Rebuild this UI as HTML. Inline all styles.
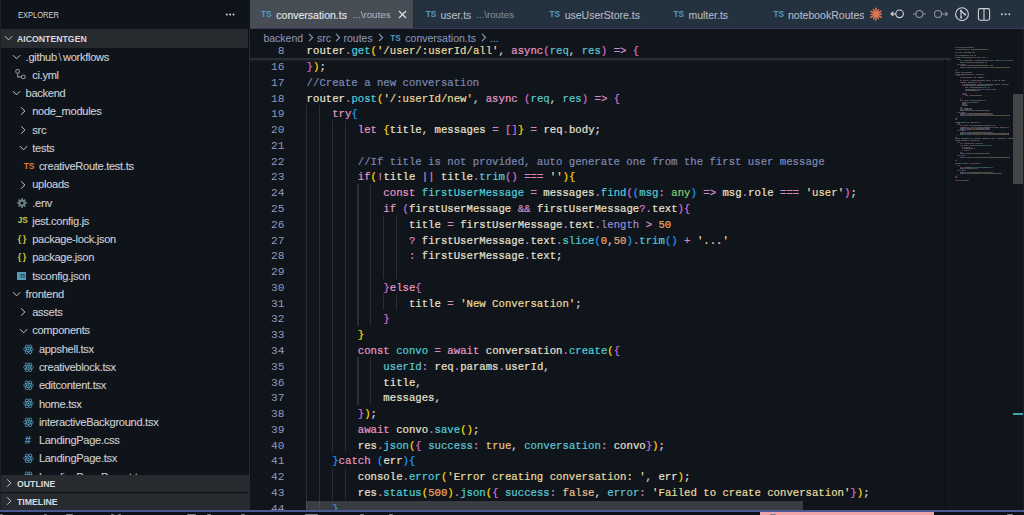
<!DOCTYPE html><html><head><meta charset="utf-8"><style>
*{margin:0;padding:0;box-sizing:border-box}
html,body{width:1024px;height:515px;overflow:hidden;background:#10141b}
body{position:relative;font-family:"Liberation Sans",sans-serif}
.a{position:absolute}
#sb{position:absolute;left:0;top:0;width:249px;height:510px;background:#0f131a;overflow:hidden}
.row{position:absolute;left:0;width:249px;height:18.26px;color:#cccfd6;font-size:11.1px;letter-spacing:-0.3px;line-height:19.6px;white-space:pre;-webkit-text-stroke:0.12px}
.row .t{position:absolute;top:0}
.chev{position:absolute;width:5px;height:5px;border-right:1.1px solid #c5c8ce;border-bottom:1.1px solid #c5c8ce}
.cl{position:absolute;left:306.6px;height:15.77px;line-height:15.77px;font-family:"Liberation Mono",monospace;font-size:10.67px;white-space:pre;color:#e6e1cf;-webkit-text-stroke:0.2px;transform:scaleY(1.04);transform-origin:0 10.4px}
.ln{position:absolute;left:250px;width:34.5px;text-align:right;height:15.77px;line-height:15.77px;font-family:"Liberation Mono",monospace;font-size:11.2px;color:#9199bd;transform:scaleY(1.05);transform-origin:0 10.4px}
.v{color:#e6e1cf}.p{color:#d77cc0}.f{color:#4fcfd9}.s{color:#e8dc9f}.k{color:#e698c6}.o{color:#d58ac6}
.c{color:#7d88b5}.n{color:#e7a76a}.b{color:#e9c08a}.ty{color:#80d27a}.pr{color:#5ec8d6}.pa{color:#5bc9cf}
.len{color:#8f8bdb}.g1{color:#ffd700}.g2{color:#da70d6}.g3{color:#179fff}.w{color:#d9d9d9}.cn{color:#4fcfd9}
.gd{position:absolute;width:1.2px;background:#2a2e35}
.mm{position:absolute;height:1.2px;opacity:0.3}
.tab{position:absolute;top:0;height:28px;font-size:10.5px;line-height:30px;-webkit-text-stroke:0.1px;white-space:pre;color:#aab0ba}
.ts{font-family:"Liberation Sans",sans-serif;font-weight:bold;font-size:8px;color:#519aba}
</style></head><body>
<div id="sb"><div class="a" style="left:0;top:0;width:1px;height:510px;background:#1c2027"></div><div class="a" style="left:17.6px;top:0;height:29px;line-height:30.6px;font-size:9.6px;color:#d0d3d8;transform:scaleX(0.785);transform-origin:0 0">EXPLORER</div><svg class="a" style="left:224px;top:12px" width="12" height="5" viewBox="0 0 12 5"><g fill="#d0d3d8"><circle cx="2.8" cy="2.4" r="1"/><circle cx="6.2" cy="2.4" r="1"/><circle cx="9.5" cy="2.4" r="1"/></g></svg><div class="a" style="left:1px;top:29.3px;width:248px;height:18.26px;background:#272a2e"></div><svg class="a" style="left:3.90px;top:34.43px" width="10" height="8" viewBox="0 0 10 8"><path d="M1 2.2L4.6 5.8L8.2 2.2" fill="none" stroke="#c3c7cd" stroke-width="1"/></svg><div class="a" style="left:17.4px;top:29.3px;height:18.26px;line-height:18.26px;font-size:9.7px;font-weight:bold;color:#d8dbe0;transform:scaleX(0.9);transform-origin:0 0;line-height:19.3px">AICONTENTGEN</div><svg class="a" style="left:12.20px;top:52.69px" width="10" height="8" viewBox="0 0 10 8"><path d="M1 2.2L4.6 5.8L8.2 2.2" fill="none" stroke="#c3c7cd" stroke-width="1"/></svg><div class="row" style="top:47.56px"><span class="t" style="left:25.6px">.github<span style="color:#9aa0a8;margin:0 1.8px 0 1.6px">\</span>workflows</span></div><svg class="a" style="left:15.24px;top:69.35px" width="11" height="11" viewBox="0 0 11 11"><g fill="none" stroke="#8a8f98" stroke-width="1.1"><circle cx="2.6" cy="2.4" r="1.9"/><circle cx="8.3" cy="7.9" r="1.9"/><path d="M2.6 4.3V7.9H6.4"/></g></svg><div class="row" style="top:65.82px"><span class="t" style="left:32.24px">ci.yml</span></div><svg class="a" style="left:12.20px;top:89.21px" width="10" height="8" viewBox="0 0 10 8"><path d="M1 2.2L4.6 5.8L8.2 2.2" fill="none" stroke="#c3c7cd" stroke-width="1"/></svg><div class="row" style="top:84.08px"><span class="t" style="left:25.60px">backend</span></div><svg class="a" style="left:19.64px;top:106.47px" width="7" height="10" viewBox="0 0 7 10"><path d="M1.2 1.3L4.8 5L1.2 8.7" fill="none" stroke="#c3c7cd" stroke-width="1"/></svg><div class="row" style="top:102.34px"><span class="t" style="left:32.24px">node_modules</span></div><svg class="a" style="left:19.64px;top:124.73px" width="7" height="10" viewBox="0 0 7 10"><path d="M1.2 1.3L4.8 5L1.2 8.7" fill="none" stroke="#c3c7cd" stroke-width="1"/></svg><div class="row" style="top:120.60px"><span class="t" style="left:32.24px">src</span></div><svg class="a" style="left:18.84px;top:143.99px" width="10" height="8" viewBox="0 0 10 8"><path d="M1 2.2L4.6 5.8L8.2 2.2" fill="none" stroke="#c3c7cd" stroke-width="1"/></svg><div class="row" style="top:138.86px"><span class="t" style="left:32.24px">tests</span></div><div class="a" style="left:23.68px;top:157.12px;line-height:18.26px;font-size:8.4px;font-weight:bold;color:#e37933">TS</div><div class="row" style="top:157.12px"><span class="t" style="left:38.88px">creativeRoute.test.ts</span></div><svg class="a" style="left:19.64px;top:179.51px" width="7" height="10" viewBox="0 0 7 10"><path d="M1.2 1.3L4.8 5L1.2 8.7" fill="none" stroke="#c3c7cd" stroke-width="1"/></svg><div class="row" style="top:175.38px"><span class="t" style="left:32.24px">uploads</span></div><svg class="a" style="left:16.74px;top:197.77px" width="10" height="10" viewBox="0 0 10 10"><g fill="#6d8086"><circle cx="5" cy="5" r="3.4"/><rect x="4.1" y="0.2" width="1.8" height="2.2" transform="rotate(0 5 5)"/><rect x="4.1" y="0.2" width="1.8" height="2.2" transform="rotate(45 5 5)"/><rect x="4.1" y="0.2" width="1.8" height="2.2" transform="rotate(90 5 5)"/><rect x="4.1" y="0.2" width="1.8" height="2.2" transform="rotate(135 5 5)"/><rect x="4.1" y="0.2" width="1.8" height="2.2" transform="rotate(180 5 5)"/><rect x="4.1" y="0.2" width="1.8" height="2.2" transform="rotate(225 5 5)"/><rect x="4.1" y="0.2" width="1.8" height="2.2" transform="rotate(270 5 5)"/><rect x="4.1" y="0.2" width="1.8" height="2.2" transform="rotate(315 5 5)"/></g><circle cx="5" cy="5" r="1.5" fill="#0f131a"/></svg><div class="row" style="top:193.64px"><span class="t" style="left:32.24px">.env</span></div><div class="a" style="left:17.74px;top:211.90000000000003px;line-height:18.26px;font-size:8.2px;font-weight:bold;color:#cbcb41">JS</div><div class="row" style="top:211.90px"><span class="t" style="left:32.24px">jest.config.js</span></div><div class="a" style="left:17.64px;top:230.16000000000003px;line-height:18.66px;font-size:9px;font-weight:bold;color:#cbcb41;letter-spacing:1.6px">{}</div><div class="row" style="top:230.16px"><span class="t" style="left:32.24px">package-lock.json</span></div><div class="a" style="left:17.64px;top:248.42000000000002px;line-height:18.66px;font-size:9px;font-weight:bold;color:#cbcb41;letter-spacing:1.6px">{}</div><div class="row" style="top:248.42px"><span class="t" style="left:32.24px">package.json</span></div><div class="a" style="left:16.94px;top:271.51px;width:9.4px;height:8.6px;background:#519aba"></div><div class="a" style="left:19.64px;top:275.31px;font-size:4.5px;line-height:4px;color:#1b3c4c;font-weight:bold">TS</div><div class="row" style="top:266.68px"><span class="t" style="left:32.24px">tsconfig.json</span></div><svg class="a" style="left:12.20px;top:290.07px" width="10" height="8" viewBox="0 0 10 8"><path d="M1 2.2L4.6 5.8L8.2 2.2" fill="none" stroke="#c3c7cd" stroke-width="1"/></svg><div class="row" style="top:284.94px"><span class="t" style="left:25.60px">frontend</span></div><svg class="a" style="left:19.64px;top:307.33px" width="7" height="10" viewBox="0 0 7 10"><path d="M1.2 1.3L4.8 5L1.2 8.7" fill="none" stroke="#c3c7cd" stroke-width="1"/></svg><div class="row" style="top:303.20px"><span class="t" style="left:32.24px">assets</span></div><svg class="a" style="left:18.84px;top:326.59px" width="10" height="8" viewBox="0 0 10 8"><path d="M1 2.2L4.6 5.8L8.2 2.2" fill="none" stroke="#c3c7cd" stroke-width="1"/></svg><div class="row" style="top:321.46px"><span class="t" style="left:32.24px">components</span></div><svg class="a" style="left:22.88px;top:343.55px" width="11" height="10.6" viewBox="0 0 22 21"><g fill="none" stroke="#519aba" stroke-width="1.6"><ellipse cx="11" cy="10.5" rx="10" ry="4"/><ellipse cx="11" cy="10.5" rx="10" ry="4" transform="rotate(60 11 10.5)"/><ellipse cx="11" cy="10.5" rx="10" ry="4" transform="rotate(120 11 10.5)"/></g><circle cx="11" cy="10.5" r="2" fill="#519aba"/></svg><div class="row" style="top:339.72px"><span class="t" style="left:38.88px">appshell.tsx</span></div><svg class="a" style="left:22.88px;top:361.81px" width="11" height="10.6" viewBox="0 0 22 21"><g fill="none" stroke="#519aba" stroke-width="1.6"><ellipse cx="11" cy="10.5" rx="10" ry="4"/><ellipse cx="11" cy="10.5" rx="10" ry="4" transform="rotate(60 11 10.5)"/><ellipse cx="11" cy="10.5" rx="10" ry="4" transform="rotate(120 11 10.5)"/></g><circle cx="11" cy="10.5" r="2" fill="#519aba"/></svg><div class="row" style="top:357.98px"><span class="t" style="left:38.88px">creativeblock.tsx</span></div><svg class="a" style="left:22.88px;top:380.07px" width="11" height="10.6" viewBox="0 0 22 21"><g fill="none" stroke="#519aba" stroke-width="1.6"><ellipse cx="11" cy="10.5" rx="10" ry="4"/><ellipse cx="11" cy="10.5" rx="10" ry="4" transform="rotate(60 11 10.5)"/><ellipse cx="11" cy="10.5" rx="10" ry="4" transform="rotate(120 11 10.5)"/></g><circle cx="11" cy="10.5" r="2" fill="#519aba"/></svg><div class="row" style="top:376.24px"><span class="t" style="left:38.88px">editcontent.tsx</span></div><svg class="a" style="left:22.88px;top:398.33px" width="11" height="10.6" viewBox="0 0 22 21"><g fill="none" stroke="#519aba" stroke-width="1.6"><ellipse cx="11" cy="10.5" rx="10" ry="4"/><ellipse cx="11" cy="10.5" rx="10" ry="4" transform="rotate(60 11 10.5)"/><ellipse cx="11" cy="10.5" rx="10" ry="4" transform="rotate(120 11 10.5)"/></g><circle cx="11" cy="10.5" r="2" fill="#519aba"/></svg><div class="row" style="top:394.50px"><span class="t" style="left:38.88px">home.tsx</span></div><svg class="a" style="left:22.88px;top:416.59px" width="11" height="10.6" viewBox="0 0 22 21"><g fill="none" stroke="#519aba" stroke-width="1.6"><ellipse cx="11" cy="10.5" rx="10" ry="4"/><ellipse cx="11" cy="10.5" rx="10" ry="4" transform="rotate(60 11 10.5)"/><ellipse cx="11" cy="10.5" rx="10" ry="4" transform="rotate(120 11 10.5)"/></g><circle cx="11" cy="10.5" r="2" fill="#519aba"/></svg><div class="row" style="top:412.76px"><span class="t" style="left:38.88px">interactiveBackground.tsx</span></div><div class="a" style="left:24.68px;top:431.02000000000004px;line-height:18.26px;font-size:11px;font-weight:bold;color:#519aba">#</div><div class="row" style="top:431.02px"><span class="t" style="left:38.88px">LandingPage.css</span></div><svg class="a" style="left:22.88px;top:453.11px" width="11" height="10.6" viewBox="0 0 22 21"><g fill="none" stroke="#519aba" stroke-width="1.6"><ellipse cx="11" cy="10.5" rx="10" ry="4"/><ellipse cx="11" cy="10.5" rx="10" ry="4" transform="rotate(60 11 10.5)"/><ellipse cx="11" cy="10.5" rx="10" ry="4" transform="rotate(120 11 10.5)"/></g><circle cx="11" cy="10.5" r="2" fill="#519aba"/></svg><div class="row" style="top:449.28px"><span class="t" style="left:38.88px">LandingPage.tsx</span></div><svg class="a" style="left:22.88px;top:471.37px" width="11" height="10.6" viewBox="0 0 22 21"><g fill="none" stroke="#519aba" stroke-width="1.6"><ellipse cx="11" cy="10.5" rx="10" ry="4"/><ellipse cx="11" cy="10.5" rx="10" ry="4" transform="rotate(60 11 10.5)"/><ellipse cx="11" cy="10.5" rx="10" ry="4" transform="rotate(120 11 10.5)"/></g><circle cx="11" cy="10.5" r="2" fill="#519aba"/></svg><div class="row" style="top:467.54px"><span class="t" style="left:38.88px">LandingPageParent.tsx</span></div><div class="a" style="left:1px;top:474.9px;width:248px;height:17.6px;background:#272a2e"></div><div class="a" style="left:1px;top:492.5px;width:248px;height:17.5px;background:#272a2e;border-top:1px solid #1d2024"></div><svg class="a" style="left:6.20px;top:478.10px" width="7" height="10" viewBox="0 0 7 10"><path d="M1.2 1.3L4.8 5L1.2 8.7" fill="none" stroke="#c3c7cd" stroke-width="1"/></svg><svg class="a" style="left:6.20px;top:495.60px" width="7" height="10" viewBox="0 0 7 10"><path d="M1.2 1.3L4.8 5L1.2 8.7" fill="none" stroke="#c3c7cd" stroke-width="1"/></svg><div class="a" style="left:17.3px;top:474.9px;line-height:17.6px;font-size:9.7px;font-weight:bold;color:#d8dbe0;transform:scaleX(0.9);transform-origin:0 0;line-height:18.6px">OUTLINE</div><div class="a" style="left:17.3px;top:492.5px;line-height:17.5px;font-size:9.7px;font-weight:bold;color:#d8dbe0;transform:scaleX(0.9);transform-origin:0 0;line-height:18.5px">TIMELINE</div></div><div class="a" style="left:248px;top:29px;width:3px;height:446px;background:#0c1015"></div><div class="a" style="left:249px;top:29px;width:1px;height:481px;background:#272b34"></div><div class="a" style="left:250px;top:0;width:774px;height:28px;background:#24313e"></div><div class="a" style="left:249.5px;top:0;width:163.5px;height:28px;background:#474d55"></div><div class="a" style="left:250px;top:27.8px;width:774px;height:1.4px;background:#3f3655"></div><div class="a" style="left:413px;top:0;width:1.2px;height:27.8px;background:#1f2a35"></div><div class="tab ts" style="left:261px;line-height:29.6px;font-size:8.2px">TS</div><div class="tab" style="left:276.3px;color:#e8eaee">conversation.ts</div><div class="tab" style="left:352.5px;font-size:9.8px;color:#a7adb6">...\routes</div><svg class="a" style="left:397.5px;top:9.5px" width="9" height="9" viewBox="0 0 9 9"><path d="M1 1L8 8M8 1L1 8" stroke="#e0e2e6" stroke-width="1.2"/></svg><div class="tab ts" style="left:425.8px;line-height:29.6px;font-size:8.2px">TS</div><div class="tab" style="left:440.4px;color:#b4bac4">user.ts</div><div class="tab" style="left:476px;font-size:9.8px;color:#7f8794">...\routes</div><div class="tab ts" style="left:549.4px;line-height:29.6px;font-size:8.2px">TS</div><div class="tab" style="left:564.7px;color:#b4bac4">useUserStore.ts</div><div class="tab ts" style="left:673.5px;line-height:29.6px;font-size:8.2px">TS</div><div class="tab" style="left:688.4px;color:#b4bac4">multer.ts</div><div class="a" style="left:773px;top:0;width:90.5px;height:28px;overflow:hidden"><div class="tab ts" style="left:0.5px;line-height:29.6px;font-size:8.2px">TS</div><div class="tab" style="left:15px;color:#b4bac4">notebookRoutes.ts</div></div><svg class="a" style="left:860px;top:0px" width="164" height="28" viewBox="860 0 164 28">
<g transform="translate(876,14.3)" fill="#e0764f"><rect x="-0.75" y="-6.8" width="1.5" height="5.3" rx="0.7" transform="rotate(0)"/><rect x="-0.75" y="-5.8" width="1.5" height="4.3" rx="0.7" transform="rotate(30)"/><rect x="-0.75" y="-6.6" width="1.5" height="5.1" rx="0.7" transform="rotate(58)"/><rect x="-0.75" y="-6.0" width="1.5" height="4.5" rx="0.7" transform="rotate(88)"/><rect x="-0.75" y="-6.9" width="1.5" height="5.4" rx="0.7" transform="rotate(120)"/><rect x="-0.75" y="-5.6" width="1.5" height="4.1" rx="0.7" transform="rotate(150)"/><rect x="-0.75" y="-6.4" width="1.5" height="4.9" rx="0.7" transform="rotate(182)"/><rect x="-0.75" y="-6.0" width="1.5" height="4.5" rx="0.7" transform="rotate(208)"/><rect x="-0.75" y="-6.8" width="1.5" height="5.3" rx="0.7" transform="rotate(240)"/><rect x="-0.75" y="-5.7" width="1.5" height="4.2" rx="0.7" transform="rotate(268)"/><rect x="-0.75" y="-6.6" width="1.5" height="5.1" rx="0.7" transform="rotate(300)"/><rect x="-0.75" y="-6.1" width="1.5" height="4.6" rx="0.7" transform="rotate(330)"/><circle r="2.6"/></g>
<g fill="none" stroke="#cdd1d6" stroke-width="1.15"><circle cx="899.6" cy="13.8" r="3.8"/><path d="M895.8 13.8H891.2M893.3 11.6L891 13.8L893.3 16"/></g>
<g fill="none" stroke="#8e949d" stroke-width="1.05"><circle cx="919.4" cy="14" r="3.5"/><path d="M913 14H915.9M922.9 14H925.8"/></g>
<g fill="none" stroke="#8e949d" stroke-width="1.05"><circle cx="938" cy="14" r="3.5"/><path d="M941.5 14H947.4M945.3 11.8L947.5 14L945.3 16.2"/></g>
<g fill="none" stroke="#cdd1d6" stroke-width="1.1"><circle cx="962" cy="14.2" r="6.4"/><path d="M961 11V17.6M961 11L965 14.5"/></g>
<g fill="#cdd1d6"><circle cx="961" cy="10.9" r="1.05"/><circle cx="961.2" cy="17.6" r="1.05"/><circle cx="965.1" cy="14.6" r="1.05"/></g>
<g fill="none" stroke="#cdd1d6" stroke-width="1.1"><rect x="978.4" y="8.6" width="11.2" height="11.6" rx="1.6"/><path d="M984 8.6V20.2"/></g>
<g fill="#cdd1d6"><circle cx="1001.9" cy="14.3" r="0.95"/><circle cx="1005.6" cy="14.3" r="0.95"/><circle cx="1009.3" cy="14.3" r="0.95"/></g>
</svg><div class="a" style="left:263.4px;top:29px;height:17px;line-height:18.5px;font-size:10.5px;color:#8b93b6;white-space:pre;-webkit-text-stroke:0.1px">backend</div><svg class="a" style="left:307.8px;top:33.3px" width="6" height="9" viewBox="0 0 6 9"><path d="M1 0.8L4.6 4.5L1 8.2" fill="none" stroke="#8b93b6" stroke-width="1.2"/></svg><div class="a" style="left:317px;top:29px;height:17px;line-height:18.5px;font-size:10.5px;color:#8b93b6;white-space:pre;-webkit-text-stroke:0.1px">src</div><svg class="a" style="left:335px;top:33.3px" width="6" height="9" viewBox="0 0 6 9"><path d="M1 0.8L4.6 4.5L1 8.2" fill="none" stroke="#8b93b6" stroke-width="1.2"/></svg><div class="a" style="left:343.5px;top:29px;height:17px;line-height:18.5px;font-size:10.5px;color:#8b93b6;white-space:pre;-webkit-text-stroke:0.1px">routes</div><svg class="a" style="left:377.5px;top:33.3px" width="6" height="9" viewBox="0 0 6 9"><path d="M1 0.8L4.6 4.5L1 8.2" fill="none" stroke="#8b93b6" stroke-width="1.2"/></svg><div class="a ts" style="left:390.3px;top:29px;line-height:19px;font-size:8.2px">TS</div><div class="a" style="left:405.3px;top:29px;height:17px;line-height:18.5px;font-size:10.5px;color:#8b93b6;white-space:pre;-webkit-text-stroke:0.1px">conversation.ts</div><svg class="a" style="left:480.8px;top:33.3px" width="6" height="9" viewBox="0 0 6 9"><path d="M1 0.8L4.6 4.5L1 8.2" fill="none" stroke="#8b93b6" stroke-width="1.2"/></svg><div class="a" style="left:490px;top:29px;height:17px;line-height:18.5px;font-size:10.5px;color:#8b93b6;white-space:pre;-webkit-text-stroke:0.1px">...</div><div class="gd" style="left:306.20px;top:105.01px;height:16.07px"></div><div class="gd" style="left:319.00px;top:105.01px;height:16.07px"></div><div class="gd" style="left:306.20px;top:120.78px;height:16.07px"></div><div class="gd" style="left:319.00px;top:120.78px;height:16.07px"></div><div class="gd" style="left:331.81px;top:120.78px;height:16.07px"></div><div class="gd" style="left:344.61px;top:120.78px;height:16.07px"></div><div class="gd" style="left:306.20px;top:136.55px;height:16.07px"></div><div class="gd" style="left:319.00px;top:136.55px;height:16.07px"></div><div class="gd" style="left:331.81px;top:136.55px;height:16.07px"></div><div class="gd" style="left:344.61px;top:136.55px;height:16.07px"></div><div class="gd" style="left:306.20px;top:152.32px;height:16.07px"></div><div class="gd" style="left:319.00px;top:152.32px;height:16.07px"></div><div class="gd" style="left:331.81px;top:152.32px;height:16.07px"></div><div class="gd" style="left:344.61px;top:152.32px;height:16.07px"></div><div class="gd" style="left:306.20px;top:168.09px;height:16.07px"></div><div class="gd" style="left:319.00px;top:168.09px;height:16.07px"></div><div class="gd" style="left:331.81px;top:168.09px;height:16.07px"></div><div class="gd" style="left:344.61px;top:168.09px;height:16.07px"></div><div class="gd" style="left:306.20px;top:183.86px;height:16.07px"></div><div class="gd" style="left:319.00px;top:183.86px;height:16.07px"></div><div class="gd" style="left:331.81px;top:183.86px;height:16.07px"></div><div class="gd" style="left:344.61px;top:183.86px;height:16.07px"></div><div class="gd" style="left:357.42px;top:183.86px;height:16.07px"></div><div class="gd" style="left:370.22px;top:183.86px;height:16.07px"></div><div class="gd" style="left:306.20px;top:199.63px;height:16.07px"></div><div class="gd" style="left:319.00px;top:199.63px;height:16.07px"></div><div class="gd" style="left:331.81px;top:199.63px;height:16.07px"></div><div class="gd" style="left:344.61px;top:199.63px;height:16.07px"></div><div class="gd" style="left:357.42px;top:199.63px;height:16.07px"></div><div class="gd" style="left:370.22px;top:199.63px;height:16.07px"></div><div class="gd" style="left:306.20px;top:215.40px;height:16.07px"></div><div class="gd" style="left:319.00px;top:215.40px;height:16.07px"></div><div class="gd" style="left:331.81px;top:215.40px;height:16.07px"></div><div class="gd" style="left:344.61px;top:215.40px;height:16.07px"></div><div class="gd" style="left:357.42px;top:215.40px;height:16.07px"></div><div class="gd" style="left:370.22px;top:215.40px;height:16.07px"></div><div class="gd" style="left:383.02px;top:215.40px;height:16.07px"></div><div class="gd" style="left:395.83px;top:215.40px;height:16.07px"></div><div class="gd" style="left:306.20px;top:231.17px;height:16.07px"></div><div class="gd" style="left:319.00px;top:231.17px;height:16.07px"></div><div class="gd" style="left:331.81px;top:231.17px;height:16.07px"></div><div class="gd" style="left:344.61px;top:231.17px;height:16.07px"></div><div class="gd" style="left:357.42px;top:231.17px;height:16.07px"></div><div class="gd" style="left:370.22px;top:231.17px;height:16.07px"></div><div class="gd" style="left:383.02px;top:231.17px;height:16.07px"></div><div class="gd" style="left:395.83px;top:231.17px;height:16.07px"></div><div class="gd" style="left:306.20px;top:246.94px;height:16.07px"></div><div class="gd" style="left:319.00px;top:246.94px;height:16.07px"></div><div class="gd" style="left:331.81px;top:246.94px;height:16.07px"></div><div class="gd" style="left:344.61px;top:246.94px;height:16.07px"></div><div class="gd" style="left:357.42px;top:246.94px;height:16.07px"></div><div class="gd" style="left:370.22px;top:246.94px;height:16.07px"></div><div class="gd" style="left:383.02px;top:246.94px;height:16.07px"></div><div class="gd" style="left:395.83px;top:246.94px;height:16.07px"></div><div class="gd" style="left:306.20px;top:262.71px;height:16.07px"></div><div class="gd" style="left:319.00px;top:262.71px;height:16.07px"></div><div class="gd" style="left:331.81px;top:262.71px;height:16.07px"></div><div class="gd" style="left:344.61px;top:262.71px;height:16.07px"></div><div class="gd" style="left:357.42px;top:262.71px;height:16.07px"></div><div class="gd" style="left:370.22px;top:262.71px;height:16.07px"></div><div class="gd" style="left:383.02px;top:262.71px;height:16.07px"></div><div class="gd" style="left:395.83px;top:262.71px;height:16.07px"></div><div class="gd" style="left:306.20px;top:278.48px;height:16.07px"></div><div class="gd" style="left:319.00px;top:278.48px;height:16.07px"></div><div class="gd" style="left:331.81px;top:278.48px;height:16.07px"></div><div class="gd" style="left:344.61px;top:278.48px;height:16.07px"></div><div class="gd" style="left:357.42px;top:278.48px;height:16.07px"></div><div class="gd" style="left:370.22px;top:278.48px;height:16.07px"></div><div class="gd" style="left:306.20px;top:294.25px;height:16.07px"></div><div class="gd" style="left:319.00px;top:294.25px;height:16.07px"></div><div class="gd" style="left:331.81px;top:294.25px;height:16.07px"></div><div class="gd" style="left:344.61px;top:294.25px;height:16.07px"></div><div class="gd" style="left:357.42px;top:294.25px;height:16.07px"></div><div class="gd" style="left:370.22px;top:294.25px;height:16.07px"></div><div class="gd" style="left:383.02px;top:294.25px;height:16.07px"></div><div class="gd" style="left:395.83px;top:294.25px;height:16.07px"></div><div class="gd" style="left:306.20px;top:310.02px;height:16.07px"></div><div class="gd" style="left:319.00px;top:310.02px;height:16.07px"></div><div class="gd" style="left:331.81px;top:310.02px;height:16.07px"></div><div class="gd" style="left:344.61px;top:310.02px;height:16.07px"></div><div class="gd" style="left:357.42px;top:310.02px;height:16.07px"></div><div class="gd" style="left:370.22px;top:310.02px;height:16.07px"></div><div class="gd" style="left:306.20px;top:325.79px;height:16.07px"></div><div class="gd" style="left:319.00px;top:325.79px;height:16.07px"></div><div class="gd" style="left:331.81px;top:325.79px;height:16.07px"></div><div class="gd" style="left:344.61px;top:325.79px;height:16.07px"></div><div class="gd" style="left:306.20px;top:341.56px;height:16.07px"></div><div class="gd" style="left:319.00px;top:341.56px;height:16.07px"></div><div class="gd" style="left:331.81px;top:341.56px;height:16.07px"></div><div class="gd" style="left:344.61px;top:341.56px;height:16.07px"></div><div class="gd" style="left:306.20px;top:357.33px;height:16.07px"></div><div class="gd" style="left:319.00px;top:357.33px;height:16.07px"></div><div class="gd" style="left:331.81px;top:357.33px;height:16.07px"></div><div class="gd" style="left:344.61px;top:357.33px;height:16.07px"></div><div class="gd" style="left:357.42px;top:357.33px;height:16.07px"></div><div class="gd" style="left:370.22px;top:357.33px;height:16.07px"></div><div class="gd" style="left:306.20px;top:373.10px;height:16.07px"></div><div class="gd" style="left:319.00px;top:373.10px;height:16.07px"></div><div class="gd" style="left:331.81px;top:373.10px;height:16.07px"></div><div class="gd" style="left:344.61px;top:373.10px;height:16.07px"></div><div class="gd" style="left:357.42px;top:373.10px;height:16.07px"></div><div class="gd" style="left:370.22px;top:373.10px;height:16.07px"></div><div class="gd" style="left:306.20px;top:388.87px;height:16.07px"></div><div class="gd" style="left:319.00px;top:388.87px;height:16.07px"></div><div class="gd" style="left:331.81px;top:388.87px;height:16.07px"></div><div class="gd" style="left:344.61px;top:388.87px;height:16.07px"></div><div class="gd" style="left:357.42px;top:388.87px;height:16.07px"></div><div class="gd" style="left:370.22px;top:388.87px;height:16.07px"></div><div class="gd" style="left:306.20px;top:404.64px;height:16.07px"></div><div class="gd" style="left:319.00px;top:404.64px;height:16.07px"></div><div class="gd" style="left:331.81px;top:404.64px;height:16.07px"></div><div class="gd" style="left:344.61px;top:404.64px;height:16.07px"></div><div class="gd" style="left:306.20px;top:420.41px;height:16.07px"></div><div class="gd" style="left:319.00px;top:420.41px;height:16.07px"></div><div class="gd" style="left:331.81px;top:420.41px;height:16.07px"></div><div class="gd" style="left:344.61px;top:420.41px;height:16.07px"></div><div class="gd" style="left:306.20px;top:436.18px;height:16.07px"></div><div class="gd" style="left:319.00px;top:436.18px;height:16.07px"></div><div class="gd" style="left:331.81px;top:436.18px;height:16.07px"></div><div class="gd" style="left:344.61px;top:436.18px;height:16.07px"></div><div class="gd" style="left:306.20px;top:451.95px;height:16.07px"></div><div class="gd" style="left:319.00px;top:451.95px;height:16.07px"></div><div class="gd" style="left:306.20px;top:467.72px;height:16.07px"></div><div class="gd" style="left:319.00px;top:467.72px;height:16.07px"></div><div class="gd" style="left:331.81px;top:467.72px;height:16.07px"></div><div class="gd" style="left:344.61px;top:467.72px;height:16.07px"></div><div class="gd" style="left:306.20px;top:483.49px;height:16.07px"></div><div class="gd" style="left:319.00px;top:483.49px;height:16.07px"></div><div class="gd" style="left:331.81px;top:483.49px;height:16.07px"></div><div class="gd" style="left:344.61px;top:483.49px;height:16.07px"></div><div class="gd" style="left:306.20px;top:499.26px;height:16.07px"></div><div class="gd" style="left:319.00px;top:499.26px;height:16.07px"></div><div class="ln" style="top:60.10px">16</div><div class="cl" style="top:60.10px"><span class="g2">}</span><span class="g1">)</span><span class="w">;</span></div><div class="ln" style="top:75.87px">17</div><div class="cl" style="top:75.87px"><span class="c">//Create a new conversation</span></div><div class="ln" style="top:91.64px">18</div><div class="cl" style="top:91.64px"><span class="v">router</span><span class="p">.</span><span class="f">post</span><span class="g1">(</span><span class="s">&#x27;/:userId/new&#x27;</span><span class="w">, </span><span class="k">async</span><span class="w"> </span><span class="g2">(</span><span class="pa">req</span><span class="w">, </span><span class="pa">res</span><span class="g2">)</span><span class="w"> </span><span class="o">=&gt;</span><span class="w"> </span><span class="g2">{</span></div><div class="ln" style="top:107.41px">19</div><div class="cl" style="top:107.41px"><span class="w">    </span><span class="k">try</span><span class="g3">{</span></div><div class="ln" style="top:123.18px">20</div><div class="cl" style="top:123.18px"><span class="w">        </span><span class="k">let</span><span class="w"> </span><span class="g1">{</span><span class="v">title</span><span class="w">, </span><span class="v">messages</span><span class="w"> </span><span class="o">=</span><span class="w"> </span><span class="g2">[</span><span class="g2">]</span><span class="g1">}</span><span class="w"> </span><span class="o">=</span><span class="w"> </span><span class="v">req</span><span class="p">.</span><span class="v">body</span><span class="w">;</span></div><div class="ln" style="top:138.95px">21</div><div class="cl" style="top:138.95px"></div><div class="ln" style="top:154.72px">22</div><div class="cl" style="top:154.72px"><span class="w">        </span><span class="c">//If title is not provided, auto generate one from the first user message</span></div><div class="ln" style="top:170.49px">23</div><div class="cl" style="top:170.49px"><span class="w">        </span><span class="k">if</span><span class="g1">(</span><span class="o">!</span><span class="v">title</span><span class="w"> </span><span class="o">||</span><span class="w"> </span><span class="v">title</span><span class="p">.</span><span class="f">trim</span><span class="g2">(</span><span class="g2">)</span><span class="w"> </span><span class="o">===</span><span class="w"> </span><span class="s">&#x27;&#x27;</span><span class="g1">)</span><span class="g1">{</span></div><div class="ln" style="top:186.26px">24</div><div class="cl" style="top:186.26px"><span class="w">            </span><span class="k">const</span><span class="w"> </span><span class="cn">firstUserMessage</span><span class="w"> </span><span class="o">=</span><span class="w"> </span><span class="v">messages</span><span class="p">.</span><span class="f">find</span><span class="g2">(</span><span class="g3">(</span><span class="pa">msg</span><span class="o">:</span><span class="w"> </span><span class="ty">any</span><span class="g3">)</span><span class="w"> </span><span class="o">=&gt;</span><span class="w"> </span><span class="v">msg</span><span class="p">.</span><span class="v">role</span><span class="w"> </span><span class="o">===</span><span class="w"> </span><span class="s">&#x27;user&#x27;</span><span class="g2">)</span><span class="w">;</span></div><div class="ln" style="top:202.03px">25</div><div class="cl" style="top:202.03px"><span class="w">            </span><span class="k">if</span><span class="w"> </span><span class="g2">(</span><span class="v">firstUserMessage</span><span class="w"> </span><span class="o">&amp;&amp;</span><span class="w"> </span><span class="v">firstUserMessage</span><span class="p">?.</span><span class="v">text</span><span class="g2">)</span><span class="g2">{</span></div><div class="ln" style="top:217.80px">26</div><div class="cl" style="top:217.80px"><span class="w">                </span><span class="v">title</span><span class="w"> </span><span class="o">=</span><span class="w"> </span><span class="v">firstUserMessage</span><span class="p">.</span><span class="v">text</span><span class="p">.</span><span class="len">length</span><span class="w"> </span><span class="o">&gt;</span><span class="w"> </span><span class="n">50</span></div><div class="ln" style="top:233.57px">27</div><div class="cl" style="top:233.57px"><span class="w">                </span><span class="o">?</span><span class="w"> </span><span class="v">firstUserMessage</span><span class="p">.</span><span class="v">text</span><span class="p">.</span><span class="f">slice</span><span class="g3">(</span><span class="n">0</span><span class="w">,</span><span class="n">50</span><span class="g3">)</span><span class="p">.</span><span class="f">trim</span><span class="g3">(</span><span class="g3">)</span><span class="w"> </span><span class="o">+</span><span class="w"> </span><span class="s">&#x27;...&#x27;</span></div><div class="ln" style="top:249.34px">28</div><div class="cl" style="top:249.34px"><span class="w">                </span><span class="o">:</span><span class="w"> </span><span class="v">firstUserMessage</span><span class="p">.</span><span class="v">text</span><span class="w">;</span></div><div class="ln" style="top:265.11px">29</div><div class="cl" style="top:265.11px"></div><div class="ln" style="top:280.88px">30</div><div class="cl" style="top:280.88px"><span class="w">            </span><span class="g2">}</span><span class="k">else</span><span class="g2">{</span></div><div class="ln" style="top:296.65px">31</div><div class="cl" style="top:296.65px"><span class="w">                </span><span class="v">title</span><span class="w"> </span><span class="o">=</span><span class="w"> </span><span class="s">&#x27;New Conversation&#x27;</span><span class="w">;</span></div><div class="ln" style="top:312.42px">32</div><div class="cl" style="top:312.42px"><span class="w">            </span><span class="g2">}</span></div><div class="ln" style="top:328.19px">33</div><div class="cl" style="top:328.19px"><span class="w">        </span><span class="g1">}</span></div><div class="ln" style="top:343.96px">34</div><div class="cl" style="top:343.96px"><span class="w">        </span><span class="k">const</span><span class="w"> </span><span class="cn">convo</span><span class="w"> </span><span class="o">=</span><span class="w"> </span><span class="k">await</span><span class="w"> </span><span class="v">conversation</span><span class="p">.</span><span class="f">create</span><span class="g1">(</span><span class="g2">{</span></div><div class="ln" style="top:359.73px">35</div><div class="cl" style="top:359.73px"><span class="w">            </span><span class="pr">userId</span><span class="o">:</span><span class="w"> </span><span class="v">req</span><span class="p">.</span><span class="v">params</span><span class="p">.</span><span class="v">userId</span><span class="w">,</span></div><div class="ln" style="top:375.50px">36</div><div class="cl" style="top:375.50px"><span class="w">            </span><span class="v">title</span><span class="w">,</span></div><div class="ln" style="top:391.27px">37</div><div class="cl" style="top:391.27px"><span class="w">            </span><span class="v">messages</span><span class="w">,</span></div><div class="ln" style="top:407.04px">38</div><div class="cl" style="top:407.04px"><span class="w">        </span><span class="g2">}</span><span class="g1">)</span><span class="w">;</span></div><div class="ln" style="top:422.81px">39</div><div class="cl" style="top:422.81px"><span class="w">        </span><span class="k">await</span><span class="w"> </span><span class="v">convo</span><span class="p">.</span><span class="f">save</span><span class="g1">(</span><span class="g1">)</span><span class="w">;</span></div><div class="ln" style="top:438.58px">40</div><div class="cl" style="top:438.58px"><span class="w">        </span><span class="v">res</span><span class="p">.</span><span class="f">json</span><span class="g1">(</span><span class="g2">{</span><span class="w"> </span><span class="pr">success</span><span class="o">:</span><span class="w"> </span><span class="b">true</span><span class="w">, </span><span class="pr">conversation</span><span class="o">:</span><span class="w"> </span><span class="v">convo</span><span class="g2">}</span><span class="g1">)</span><span class="w">;</span></div><div class="ln" style="top:454.35px">41</div><div class="cl" style="top:454.35px"><span class="w">    </span><span class="g3">}</span><span class="k">catch</span><span class="w"> </span><span class="g3">(</span><span class="v">err</span><span class="g3">)</span><span class="g3">{</span></div><div class="ln" style="top:470.12px">42</div><div class="cl" style="top:470.12px"><span class="w">        </span><span class="v">console</span><span class="p">.</span><span class="f">error</span><span class="g1">(</span><span class="s">&#x27;Error creating conversation: &#x27;</span><span class="w">, </span><span class="v">err</span><span class="g1">)</span><span class="w">;</span></div><div class="ln" style="top:485.89px">43</div><div class="cl" style="top:485.89px"><span class="w">        </span><span class="v">res</span><span class="p">.</span><span class="f">status</span><span class="g1">(</span><span class="n">500</span><span class="g1">)</span><span class="p">.</span><span class="f">json</span><span class="g1">(</span><span class="g2">{</span><span class="w"> </span><span class="pr">success</span><span class="o">:</span><span class="w"> </span><span class="b">false</span><span class="w">, </span><span class="pr">error</span><span class="o">:</span><span class="w"> </span><span class="s">&#x27;Failed to create conversation&#x27;</span><span class="g2">}</span><span class="g1">)</span><span class="w">;</span></div><div class="ln" style="top:501.66px">44</div><div class="cl" style="top:501.66px"><span class="w">    </span><span class="g3">}</span></div><div class="a" style="left:250px;top:43.9px;width:701px;height:15.77px;background:#10141b"></div><div class="ln" style="top:43.9px">8</div><div class="cl" style="top:43.90px"><span class="v">router</span><span class="p">.</span><span class="f">get</span><span class="g1">(</span><span class="s">&#x27;/user/:userId/all&#x27;</span><span class="w">, </span><span class="k">async</span><span class="g2">(</span><span class="pa">req</span><span class="w">, </span><span class="pa">res</span><span class="g2">)</span><span class="w"> </span><span class="o">=&gt;</span><span class="w"> </span><span class="g2">{</span></div><div class="a" style="left:250px;top:57.5px;width:701px;height:4px;background:linear-gradient(#2c3039 0%,#2a2e37 30%,#181c23 65%,rgba(16,20,27,0) 100%)"></div><div class="a" style="left:0;top:0;width:1013px;height:515px;overflow:hidden"><div class="mm" style="left:955.00px;top:47.00px;width:3.72px;background:#e68ac2"></div><div class="mm" style="left:959.34px;top:47.00px;width:4.34px;background:#d8d4c4"></div><div class="mm" style="left:964.30px;top:47.00px;width:2.48px;background:#e68ac2"></div><div class="mm" style="left:967.40px;top:47.00px;width:5.58px;background:#e3d3a1"></div><div class="mm" style="left:972.98px;top:47.00px;width:0.62px;background:#e07cc0"></div><div class="mm" style="left:955.00px;top:48.66px;width:3.72px;background:#e68ac2"></div><div class="mm" style="left:959.34px;top:48.66px;width:7.44px;background:#d8d4c4"></div><div class="mm" style="left:967.40px;top:48.66px;width:2.48px;background:#e68ac2"></div><div class="mm" style="left:970.50px;top:48.66px;width:16.74px;background:#e3d3a1"></div><div class="mm" style="left:987.24px;top:48.66px;width:0.62px;background:#e07cc0"></div><div class="mm" style="left:955.00px;top:51.98px;width:3.10px;background:#e68ac2"></div><div class="mm" style="left:958.72px;top:51.98px;width:3.72px;background:#d8d4c4"></div><div class="mm" style="left:963.06px;top:51.98px;width:0.62px;background:#e07cc0"></div><div class="mm" style="left:964.30px;top:51.98px;width:4.34px;background:#d8d4c4"></div><div class="mm" style="left:968.64px;top:51.98px;width:0.62px;background:#e07cc0"></div><div class="mm" style="left:969.26px;top:51.98px;width:3.72px;background:#4fcfd9"></div><div class="mm" style="left:972.98px;top:51.98px;width:0.62px;background:#da70d6"></div><div class="mm" style="left:973.60px;top:51.98px;width:0.62px;background:#da70d6"></div><div class="mm" style="left:974.22px;top:51.98px;width:0.62px;background:#e07cc0"></div><div class="mm" style="left:955.00px;top:55.30px;width:1.24px;background:#e07cc0"></div><div class="mm" style="left:956.24px;top:55.30px;width:1.86px;background:#d8d4c4"></div><div class="mm" style="left:958.72px;top:55.30px;width:1.86px;background:#d8d4c4"></div><div class="mm" style="left:961.20px;top:55.30px;width:8.06px;background:#d8d4c4"></div><div class="mm" style="left:969.88px;top:55.30px;width:1.86px;background:#d8d4c4"></div><div class="mm" style="left:972.36px;top:55.30px;width:0.62px;background:#d8d4c4"></div><div class="mm" style="left:973.60px;top:55.30px;width:2.48px;background:#d8d4c4"></div><div class="mm" style="left:955.00px;top:56.96px;width:3.72px;background:#d8d4c4"></div><div class="mm" style="left:958.72px;top:56.96px;width:0.62px;background:#e07cc0"></div><div class="mm" style="left:959.34px;top:56.96px;width:1.86px;background:#4fcfd9"></div><div class="mm" style="left:961.20px;top:56.96px;width:0.62px;background:#da70d6"></div><div class="mm" style="left:961.82px;top:56.96px;width:11.78px;background:#e3d3a1"></div><div class="mm" style="left:973.60px;top:56.96px;width:0.62px;background:#e07cc0"></div><div class="mm" style="left:974.84px;top:56.96px;width:3.10px;background:#e68ac2"></div><div class="mm" style="left:977.94px;top:56.96px;width:0.62px;background:#da70d6"></div><div class="mm" style="left:978.56px;top:56.96px;width:1.86px;background:#d8d4c4"></div><div class="mm" style="left:980.42px;top:56.96px;width:0.62px;background:#e07cc0"></div><div class="mm" style="left:981.66px;top:56.96px;width:1.86px;background:#d8d4c4"></div><div class="mm" style="left:983.52px;top:56.96px;width:0.62px;background:#da70d6"></div><div class="mm" style="left:984.76px;top:56.96px;width:1.24px;background:#e07cc0"></div><div class="mm" style="left:986.62px;top:56.96px;width:0.62px;background:#da70d6"></div><div class="mm" style="left:957.48px;top:58.62px;width:1.86px;background:#e68ac2"></div><div class="mm" style="left:959.34px;top:58.62px;width:0.62px;background:#da70d6"></div><div class="mm" style="left:959.96px;top:60.28px;width:3.10px;background:#e68ac2"></div><div class="mm" style="left:963.68px;top:60.28px;width:8.06px;background:#d8d4c4"></div><div class="mm" style="left:972.36px;top:60.28px;width:0.62px;background:#e07cc0"></div><div class="mm" style="left:973.60px;top:60.28px;width:3.10px;background:#e68ac2"></div><div class="mm" style="left:977.32px;top:60.28px;width:7.44px;background:#d8d4c4"></div><div class="mm" style="left:984.76px;top:60.28px;width:0.62px;background:#e07cc0"></div><div class="mm" style="left:985.38px;top:60.28px;width:2.48px;background:#4fcfd9"></div><div class="mm" style="left:987.86px;top:60.28px;width:0.62px;background:#da70d6"></div><div class="mm" style="left:988.48px;top:60.28px;width:0.62px;background:#da70d6"></div><div class="mm" style="left:989.72px;top:60.28px;width:3.72px;background:#d8d4c4"></div><div class="mm" style="left:993.44px;top:60.28px;width:0.62px;background:#e07cc0"></div><div class="mm" style="left:994.68px;top:60.28px;width:1.86px;background:#d8d4c4"></div><div class="mm" style="left:996.54px;top:60.28px;width:0.62px;background:#e07cc0"></div><div class="mm" style="left:997.16px;top:60.28px;width:3.72px;background:#4fcfd9"></div><div class="mm" style="left:1000.88px;top:60.28px;width:0.62px;background:#e07cc0"></div><div class="mm" style="left:1001.50px;top:60.28px;width:3.72px;background:#4fcfd9"></div><div class="mm" style="left:1005.84px;top:60.28px;width:0.62px;background:#da70d6"></div><div class="mm" style="left:1006.46px;top:60.28px;width:0.62px;background:#da70d6"></div><div class="mm" style="left:1007.08px;top:60.28px;width:0.62px;background:#e07cc0"></div><div class="mm" style="left:1007.70px;top:60.28px;width:2.48px;background:#4fcfd9"></div><div class="mm" style="left:1010.18px;top:60.28px;width:0.62px;background:#da70d6"></div><div class="mm" style="left:1010.80px;top:60.28px;width:0.62px;background:#da70d6"></div><div class="mm" style="left:1012.04px;top:60.28px;width:5.58px;background:#d8d4c4"></div><div class="mm" style="left:1017.62px;top:60.28px;width:0.62px;background:#e07cc0"></div><div class="mm" style="left:1018.86px;top:60.28px;width:1.24px;background:#e07cc0"></div><div class="mm" style="left:1020.72px;top:60.28px;width:0.62px;background:#da70d6"></div><div class="mm" style="left:1021.34px;top:60.28px;width:0.62px;background:#da70d6"></div><div class="mm" style="left:1021.96px;top:60.28px;width:0.62px;background:#e07cc0"></div><div class="mm" style="left:959.96px;top:61.94px;width:1.86px;background:#d8d4c4"></div><div class="mm" style="left:961.82px;top:61.94px;width:0.62px;background:#e07cc0"></div><div class="mm" style="left:962.44px;top:61.94px;width:2.48px;background:#4fcfd9"></div><div class="mm" style="left:964.92px;top:61.94px;width:0.62px;background:#da70d6"></div><div class="mm" style="left:965.54px;top:61.94px;width:0.62px;background:#da70d6"></div><div class="mm" style="left:966.78px;top:61.94px;width:4.34px;background:#d8d4c4"></div><div class="mm" style="left:971.12px;top:61.94px;width:0.62px;background:#e07cc0"></div><div class="mm" style="left:972.36px;top:61.94px;width:2.48px;background:#e7a76a"></div><div class="mm" style="left:974.84px;top:61.94px;width:0.62px;background:#e07cc0"></div><div class="mm" style="left:976.08px;top:61.94px;width:8.06px;background:#d8d4c4"></div><div class="mm" style="left:984.76px;top:61.94px;width:0.62px;background:#da70d6"></div><div class="mm" style="left:985.38px;top:61.94px;width:0.62px;background:#da70d6"></div><div class="mm" style="left:986.00px;top:61.94px;width:0.62px;background:#e07cc0"></div><div class="mm" style="left:957.48px;top:63.60px;width:0.62px;background:#da70d6"></div><div class="mm" style="left:958.10px;top:63.60px;width:3.10px;background:#e68ac2"></div><div class="mm" style="left:961.82px;top:63.60px;width:0.62px;background:#da70d6"></div><div class="mm" style="left:962.44px;top:63.60px;width:1.86px;background:#d8d4c4"></div><div class="mm" style="left:964.30px;top:63.60px;width:0.62px;background:#da70d6"></div><div class="mm" style="left:964.92px;top:63.60px;width:0.62px;background:#da70d6"></div><div class="mm" style="left:959.96px;top:65.26px;width:4.34px;background:#d8d4c4"></div><div class="mm" style="left:964.30px;top:65.26px;width:0.62px;background:#e07cc0"></div><div class="mm" style="left:964.92px;top:65.26px;width:3.10px;background:#4fcfd9"></div><div class="mm" style="left:968.02px;top:65.26px;width:0.62px;background:#da70d6"></div><div class="mm" style="left:968.64px;top:65.26px;width:19.84px;background:#e3d3a1"></div><div class="mm" style="left:988.48px;top:65.26px;width:0.62px;background:#e07cc0"></div><div class="mm" style="left:989.72px;top:65.26px;width:1.86px;background:#d8d4c4"></div><div class="mm" style="left:991.58px;top:65.26px;width:0.62px;background:#da70d6"></div><div class="mm" style="left:992.20px;top:65.26px;width:0.62px;background:#e07cc0"></div><div class="mm" style="left:959.96px;top:66.92px;width:1.86px;background:#d8d4c4"></div><div class="mm" style="left:961.82px;top:66.92px;width:0.62px;background:#e07cc0"></div><div class="mm" style="left:962.44px;top:66.92px;width:3.72px;background:#4fcfd9"></div><div class="mm" style="left:966.16px;top:66.92px;width:0.62px;background:#da70d6"></div><div class="mm" style="left:966.78px;top:66.92px;width:1.86px;background:#e7a76a"></div><div class="mm" style="left:968.64px;top:66.92px;width:0.62px;background:#da70d6"></div><div class="mm" style="left:969.26px;top:66.92px;width:0.62px;background:#e07cc0"></div><div class="mm" style="left:969.88px;top:66.92px;width:2.48px;background:#4fcfd9"></div><div class="mm" style="left:972.36px;top:66.92px;width:0.62px;background:#da70d6"></div><div class="mm" style="left:972.98px;top:66.92px;width:0.62px;background:#da70d6"></div><div class="mm" style="left:974.22px;top:66.92px;width:4.34px;background:#d8d4c4"></div><div class="mm" style="left:978.56px;top:66.92px;width:0.62px;background:#e07cc0"></div><div class="mm" style="left:979.80px;top:66.92px;width:3.10px;background:#e7a76a"></div><div class="mm" style="left:982.90px;top:66.92px;width:0.62px;background:#e07cc0"></div><div class="mm" style="left:984.14px;top:66.92px;width:3.10px;background:#d8d4c4"></div><div class="mm" style="left:987.24px;top:66.92px;width:0.62px;background:#e07cc0"></div><div class="mm" style="left:988.48px;top:66.92px;width:19.22px;background:#e3d3a1"></div><div class="mm" style="left:1007.70px;top:66.92px;width:0.62px;background:#da70d6"></div><div class="mm" style="left:1008.32px;top:66.92px;width:0.62px;background:#da70d6"></div><div class="mm" style="left:1008.94px;top:66.92px;width:0.62px;background:#e07cc0"></div><div class="mm" style="left:957.48px;top:68.58px;width:0.62px;background:#da70d6"></div><div class="mm" style="left:955.00px;top:70.24px;width:0.62px;background:#da70d6"></div><div class="mm" style="left:955.62px;top:70.24px;width:0.62px;background:#da70d6"></div><div class="mm" style="left:956.24px;top:70.24px;width:0.62px;background:#e07cc0"></div><div class="mm" style="left:955.00px;top:71.90px;width:1.24px;background:#e07cc0"></div><div class="mm" style="left:956.24px;top:71.90px;width:3.72px;background:#d8d4c4"></div><div class="mm" style="left:960.58px;top:71.90px;width:0.62px;background:#d8d4c4"></div><div class="mm" style="left:961.82px;top:71.90px;width:1.86px;background:#e68ac2"></div><div class="mm" style="left:964.30px;top:71.90px;width:7.44px;background:#d8d4c4"></div><div class="mm" style="left:955.00px;top:73.56px;width:3.72px;background:#d8d4c4"></div><div class="mm" style="left:958.72px;top:73.56px;width:0.62px;background:#e07cc0"></div><div class="mm" style="left:959.34px;top:73.56px;width:2.48px;background:#4fcfd9"></div><div class="mm" style="left:961.82px;top:73.56px;width:0.62px;background:#da70d6"></div><div class="mm" style="left:962.44px;top:73.56px;width:8.68px;background:#e3d3a1"></div><div class="mm" style="left:971.12px;top:73.56px;width:0.62px;background:#e07cc0"></div><div class="mm" style="left:972.36px;top:73.56px;width:3.10px;background:#e68ac2"></div><div class="mm" style="left:976.08px;top:73.56px;width:0.62px;background:#da70d6"></div><div class="mm" style="left:976.70px;top:73.56px;width:1.86px;background:#d8d4c4"></div><div class="mm" style="left:978.56px;top:73.56px;width:0.62px;background:#e07cc0"></div><div class="mm" style="left:979.80px;top:73.56px;width:1.86px;background:#d8d4c4"></div><div class="mm" style="left:981.66px;top:73.56px;width:0.62px;background:#da70d6"></div><div class="mm" style="left:982.90px;top:73.56px;width:1.24px;background:#e07cc0"></div><div class="mm" style="left:984.76px;top:73.56px;width:0.62px;background:#da70d6"></div><div class="mm" style="left:957.48px;top:75.22px;width:1.86px;background:#e68ac2"></div><div class="mm" style="left:959.34px;top:75.22px;width:0.62px;background:#da70d6"></div><div class="mm" style="left:959.96px;top:76.88px;width:1.86px;background:#e68ac2"></div><div class="mm" style="left:962.44px;top:76.88px;width:0.62px;background:#da70d6"></div><div class="mm" style="left:963.06px;top:76.88px;width:3.10px;background:#d8d4c4"></div><div class="mm" style="left:966.16px;top:76.88px;width:0.62px;background:#e07cc0"></div><div class="mm" style="left:967.40px;top:76.88px;width:4.96px;background:#d8d4c4"></div><div class="mm" style="left:972.98px;top:76.88px;width:0.62px;background:#e07cc0"></div><div class="mm" style="left:974.22px;top:76.88px;width:0.62px;background:#da70d6"></div><div class="mm" style="left:974.84px;top:76.88px;width:0.62px;background:#da70d6"></div><div class="mm" style="left:975.46px;top:76.88px;width:0.62px;background:#da70d6"></div><div class="mm" style="left:976.70px;top:76.88px;width:0.62px;background:#e07cc0"></div><div class="mm" style="left:977.94px;top:76.88px;width:1.86px;background:#d8d4c4"></div><div class="mm" style="left:979.80px;top:76.88px;width:0.62px;background:#e07cc0"></div><div class="mm" style="left:980.42px;top:76.88px;width:2.48px;background:#4fcfd9"></div><div class="mm" style="left:982.90px;top:76.88px;width:0.62px;background:#e07cc0"></div><div class="mm" style="left:959.96px;top:80.20px;width:1.24px;background:#e07cc0"></div><div class="mm" style="left:961.20px;top:80.20px;width:1.24px;background:#d8d4c4"></div><div class="mm" style="left:963.06px;top:80.20px;width:3.10px;background:#d8d4c4"></div><div class="mm" style="left:966.78px;top:80.20px;width:1.24px;background:#d8d4c4"></div><div class="mm" style="left:968.64px;top:80.20px;width:1.86px;background:#d8d4c4"></div><div class="mm" style="left:971.12px;top:80.20px;width:4.96px;background:#d8d4c4"></div><div class="mm" style="left:976.08px;top:80.20px;width:0.62px;background:#e07cc0"></div><div class="mm" style="left:977.32px;top:80.20px;width:2.48px;background:#d8d4c4"></div><div class="mm" style="left:980.42px;top:80.20px;width:4.96px;background:#d8d4c4"></div><div class="mm" style="left:986.00px;top:80.20px;width:1.86px;background:#d8d4c4"></div><div class="mm" style="left:988.48px;top:80.20px;width:2.48px;background:#e68ac2"></div><div class="mm" style="left:991.58px;top:80.20px;width:1.86px;background:#d8d4c4"></div><div class="mm" style="left:994.06px;top:80.20px;width:3.10px;background:#d8d4c4"></div><div class="mm" style="left:997.78px;top:80.20px;width:2.48px;background:#d8d4c4"></div><div class="mm" style="left:1000.88px;top:80.20px;width:4.34px;background:#d8d4c4"></div><div class="mm" style="left:959.96px;top:81.86px;width:1.24px;background:#e68ac2"></div><div class="mm" style="left:961.20px;top:81.86px;width:0.62px;background:#da70d6"></div><div class="mm" style="left:961.82px;top:81.86px;width:0.62px;background:#e07cc0"></div><div class="mm" style="left:962.44px;top:81.86px;width:3.10px;background:#d8d4c4"></div><div class="mm" style="left:966.16px;top:81.86px;width:1.24px;background:#e07cc0"></div><div class="mm" style="left:968.02px;top:81.86px;width:3.10px;background:#d8d4c4"></div><div class="mm" style="left:971.12px;top:81.86px;width:0.62px;background:#e07cc0"></div><div class="mm" style="left:971.74px;top:81.86px;width:2.48px;background:#4fcfd9"></div><div class="mm" style="left:974.22px;top:81.86px;width:0.62px;background:#da70d6"></div><div class="mm" style="left:974.84px;top:81.86px;width:0.62px;background:#da70d6"></div><div class="mm" style="left:976.08px;top:81.86px;width:1.86px;background:#e07cc0"></div><div class="mm" style="left:978.56px;top:81.86px;width:1.24px;background:#e3d3a1"></div><div class="mm" style="left:979.80px;top:81.86px;width:0.62px;background:#da70d6"></div><div class="mm" style="left:980.42px;top:81.86px;width:0.62px;background:#da70d6"></div><div class="mm" style="left:962.44px;top:83.52px;width:3.10px;background:#e68ac2"></div><div class="mm" style="left:966.16px;top:83.52px;width:9.92px;background:#d8d4c4"></div><div class="mm" style="left:976.70px;top:83.52px;width:0.62px;background:#e07cc0"></div><div class="mm" style="left:977.94px;top:83.52px;width:4.96px;background:#d8d4c4"></div><div class="mm" style="left:982.90px;top:83.52px;width:0.62px;background:#e07cc0"></div><div class="mm" style="left:983.52px;top:83.52px;width:2.48px;background:#4fcfd9"></div><div class="mm" style="left:986.00px;top:83.52px;width:0.62px;background:#da70d6"></div><div class="mm" style="left:986.62px;top:83.52px;width:0.62px;background:#da70d6"></div><div class="mm" style="left:987.24px;top:83.52px;width:1.86px;background:#d8d4c4"></div><div class="mm" style="left:989.10px;top:83.52px;width:0.62px;background:#e07cc0"></div><div class="mm" style="left:990.34px;top:83.52px;width:1.86px;background:#d8d4c4"></div><div class="mm" style="left:992.20px;top:83.52px;width:0.62px;background:#da70d6"></div><div class="mm" style="left:993.44px;top:83.52px;width:1.24px;background:#e07cc0"></div><div class="mm" style="left:995.30px;top:83.52px;width:1.86px;background:#d8d4c4"></div><div class="mm" style="left:997.16px;top:83.52px;width:0.62px;background:#e07cc0"></div><div class="mm" style="left:997.78px;top:83.52px;width:2.48px;background:#4fcfd9"></div><div class="mm" style="left:1000.88px;top:83.52px;width:1.86px;background:#e07cc0"></div><div class="mm" style="left:1003.36px;top:83.52px;width:3.72px;background:#e3d3a1"></div><div class="mm" style="left:1007.08px;top:83.52px;width:0.62px;background:#da70d6"></div><div class="mm" style="left:1007.70px;top:83.52px;width:0.62px;background:#e07cc0"></div><div class="mm" style="left:962.44px;top:85.18px;width:1.24px;background:#e68ac2"></div><div class="mm" style="left:964.30px;top:85.18px;width:0.62px;background:#da70d6"></div><div class="mm" style="left:964.92px;top:85.18px;width:9.92px;background:#d8d4c4"></div><div class="mm" style="left:975.46px;top:85.18px;width:1.24px;background:#e07cc0"></div><div class="mm" style="left:977.32px;top:85.18px;width:9.92px;background:#d8d4c4"></div><div class="mm" style="left:987.24px;top:85.18px;width:1.24px;background:#e07cc0"></div><div class="mm" style="left:988.48px;top:85.18px;width:2.48px;background:#4fcfd9"></div><div class="mm" style="left:990.96px;top:85.18px;width:0.62px;background:#da70d6"></div><div class="mm" style="left:991.58px;top:85.18px;width:0.62px;background:#da70d6"></div><div class="mm" style="left:964.92px;top:86.84px;width:3.10px;background:#d8d4c4"></div><div class="mm" style="left:968.64px;top:86.84px;width:0.62px;background:#e07cc0"></div><div class="mm" style="left:969.88px;top:86.84px;width:9.92px;background:#d8d4c4"></div><div class="mm" style="left:979.80px;top:86.84px;width:0.62px;background:#e07cc0"></div><div class="mm" style="left:980.42px;top:86.84px;width:2.48px;background:#4fcfd9"></div><div class="mm" style="left:982.90px;top:86.84px;width:0.62px;background:#e07cc0"></div><div class="mm" style="left:983.52px;top:86.84px;width:3.72px;background:#4fcfd9"></div><div class="mm" style="left:987.86px;top:86.84px;width:0.62px;background:#e07cc0"></div><div class="mm" style="left:989.10px;top:86.84px;width:1.24px;background:#e7a76a"></div><div class="mm" style="left:964.92px;top:88.50px;width:0.62px;background:#e07cc0"></div><div class="mm" style="left:966.16px;top:88.50px;width:9.92px;background:#d8d4c4"></div><div class="mm" style="left:976.08px;top:88.50px;width:0.62px;background:#e07cc0"></div><div class="mm" style="left:976.70px;top:88.50px;width:2.48px;background:#4fcfd9"></div><div class="mm" style="left:979.18px;top:88.50px;width:0.62px;background:#e07cc0"></div><div class="mm" style="left:979.80px;top:88.50px;width:3.10px;background:#4fcfd9"></div><div class="mm" style="left:982.90px;top:88.50px;width:0.62px;background:#da70d6"></div><div class="mm" style="left:983.52px;top:88.50px;width:2.48px;background:#e07cc0"></div><div class="mm" style="left:986.00px;top:88.50px;width:0.62px;background:#da70d6"></div><div class="mm" style="left:986.62px;top:88.50px;width:0.62px;background:#e07cc0"></div><div class="mm" style="left:987.24px;top:88.50px;width:2.48px;background:#4fcfd9"></div><div class="mm" style="left:989.72px;top:88.50px;width:0.62px;background:#da70d6"></div><div class="mm" style="left:990.34px;top:88.50px;width:0.62px;background:#da70d6"></div><div class="mm" style="left:991.58px;top:88.50px;width:0.62px;background:#e07cc0"></div><div class="mm" style="left:992.82px;top:88.50px;width:3.10px;background:#e3d3a1"></div><div class="mm" style="left:964.92px;top:90.16px;width:0.62px;background:#e07cc0"></div><div class="mm" style="left:966.16px;top:90.16px;width:9.92px;background:#d8d4c4"></div><div class="mm" style="left:976.08px;top:90.16px;width:0.62px;background:#e07cc0"></div><div class="mm" style="left:976.70px;top:90.16px;width:2.48px;background:#4fcfd9"></div><div class="mm" style="left:979.18px;top:90.16px;width:0.62px;background:#e07cc0"></div><div class="mm" style="left:962.44px;top:93.48px;width:0.62px;background:#da70d6"></div><div class="mm" style="left:963.06px;top:93.48px;width:2.48px;background:#e68ac2"></div><div class="mm" style="left:965.54px;top:93.48px;width:0.62px;background:#da70d6"></div><div class="mm" style="left:964.92px;top:95.14px;width:3.10px;background:#d8d4c4"></div><div class="mm" style="left:968.64px;top:95.14px;width:0.62px;background:#e07cc0"></div><div class="mm" style="left:969.88px;top:95.14px;width:11.16px;background:#e3d3a1"></div><div class="mm" style="left:981.04px;top:95.14px;width:0.62px;background:#e07cc0"></div><div class="mm" style="left:962.44px;top:96.80px;width:0.62px;background:#da70d6"></div><div class="mm" style="left:959.96px;top:98.46px;width:0.62px;background:#da70d6"></div><div class="mm" style="left:959.96px;top:100.12px;width:3.10px;background:#e68ac2"></div><div class="mm" style="left:963.68px;top:100.12px;width:3.10px;background:#d8d4c4"></div><div class="mm" style="left:967.40px;top:100.12px;width:0.62px;background:#e07cc0"></div><div class="mm" style="left:968.64px;top:100.12px;width:3.10px;background:#e68ac2"></div><div class="mm" style="left:972.36px;top:100.12px;width:7.44px;background:#d8d4c4"></div><div class="mm" style="left:979.80px;top:100.12px;width:0.62px;background:#e07cc0"></div><div class="mm" style="left:980.42px;top:100.12px;width:3.72px;background:#4fcfd9"></div><div class="mm" style="left:984.14px;top:100.12px;width:0.62px;background:#da70d6"></div><div class="mm" style="left:984.76px;top:100.12px;width:0.62px;background:#da70d6"></div><div class="mm" style="left:962.44px;top:101.78px;width:3.72px;background:#d8d4c4"></div><div class="mm" style="left:966.16px;top:101.78px;width:0.62px;background:#e07cc0"></div><div class="mm" style="left:967.40px;top:101.78px;width:1.86px;background:#d8d4c4"></div><div class="mm" style="left:969.26px;top:101.78px;width:0.62px;background:#e07cc0"></div><div class="mm" style="left:969.88px;top:101.78px;width:3.72px;background:#4fcfd9"></div><div class="mm" style="left:973.60px;top:101.78px;width:0.62px;background:#e07cc0"></div><div class="mm" style="left:974.22px;top:101.78px;width:3.72px;background:#4fcfd9"></div><div class="mm" style="left:977.94px;top:101.78px;width:0.62px;background:#e07cc0"></div><div class="mm" style="left:962.44px;top:103.44px;width:3.10px;background:#d8d4c4"></div><div class="mm" style="left:965.54px;top:103.44px;width:0.62px;background:#e07cc0"></div><div class="mm" style="left:962.44px;top:105.10px;width:4.96px;background:#d8d4c4"></div><div class="mm" style="left:967.40px;top:105.10px;width:0.62px;background:#e07cc0"></div><div class="mm" style="left:959.96px;top:106.76px;width:0.62px;background:#da70d6"></div><div class="mm" style="left:960.58px;top:106.76px;width:0.62px;background:#da70d6"></div><div class="mm" style="left:961.20px;top:106.76px;width:0.62px;background:#e07cc0"></div><div class="mm" style="left:959.96px;top:108.42px;width:3.10px;background:#e68ac2"></div><div class="mm" style="left:963.68px;top:108.42px;width:3.10px;background:#d8d4c4"></div><div class="mm" style="left:966.78px;top:108.42px;width:0.62px;background:#e07cc0"></div><div class="mm" style="left:967.40px;top:108.42px;width:2.48px;background:#4fcfd9"></div><div class="mm" style="left:969.88px;top:108.42px;width:0.62px;background:#da70d6"></div><div class="mm" style="left:970.50px;top:108.42px;width:0.62px;background:#da70d6"></div><div class="mm" style="left:971.12px;top:108.42px;width:0.62px;background:#e07cc0"></div><div class="mm" style="left:959.96px;top:110.08px;width:1.86px;background:#d8d4c4"></div><div class="mm" style="left:961.82px;top:110.08px;width:0.62px;background:#e07cc0"></div><div class="mm" style="left:962.44px;top:110.08px;width:2.48px;background:#4fcfd9"></div><div class="mm" style="left:964.92px;top:110.08px;width:0.62px;background:#da70d6"></div><div class="mm" style="left:965.54px;top:110.08px;width:0.62px;background:#da70d6"></div><div class="mm" style="left:966.78px;top:110.08px;width:4.34px;background:#d8d4c4"></div><div class="mm" style="left:971.12px;top:110.08px;width:0.62px;background:#e07cc0"></div><div class="mm" style="left:972.36px;top:110.08px;width:2.48px;background:#e7a76a"></div><div class="mm" style="left:974.84px;top:110.08px;width:0.62px;background:#e07cc0"></div><div class="mm" style="left:976.08px;top:110.08px;width:7.44px;background:#d8d4c4"></div><div class="mm" style="left:983.52px;top:110.08px;width:0.62px;background:#e07cc0"></div><div class="mm" style="left:984.76px;top:110.08px;width:3.10px;background:#d8d4c4"></div><div class="mm" style="left:987.86px;top:110.08px;width:0.62px;background:#da70d6"></div><div class="mm" style="left:988.48px;top:110.08px;width:0.62px;background:#da70d6"></div><div class="mm" style="left:989.10px;top:110.08px;width:0.62px;background:#e07cc0"></div><div class="mm" style="left:957.48px;top:111.74px;width:0.62px;background:#da70d6"></div><div class="mm" style="left:958.10px;top:111.74px;width:3.10px;background:#e68ac2"></div><div class="mm" style="left:961.82px;top:111.74px;width:0.62px;background:#da70d6"></div><div class="mm" style="left:962.44px;top:111.74px;width:1.86px;background:#d8d4c4"></div><div class="mm" style="left:964.30px;top:111.74px;width:0.62px;background:#da70d6"></div><div class="mm" style="left:964.92px;top:111.74px;width:0.62px;background:#da70d6"></div><div class="mm" style="left:959.96px;top:113.40px;width:4.34px;background:#d8d4c4"></div><div class="mm" style="left:964.30px;top:113.40px;width:0.62px;background:#e07cc0"></div><div class="mm" style="left:964.92px;top:113.40px;width:3.10px;background:#4fcfd9"></div><div class="mm" style="left:968.02px;top:113.40px;width:0.62px;background:#da70d6"></div><div class="mm" style="left:968.64px;top:113.40px;width:19.22px;background:#e3d3a1"></div><div class="mm" style="left:987.86px;top:113.40px;width:0.62px;background:#e07cc0"></div><div class="mm" style="left:989.10px;top:113.40px;width:1.86px;background:#d8d4c4"></div><div class="mm" style="left:990.96px;top:113.40px;width:0.62px;background:#da70d6"></div><div class="mm" style="left:991.58px;top:113.40px;width:0.62px;background:#e07cc0"></div><div class="mm" style="left:959.96px;top:115.06px;width:1.86px;background:#d8d4c4"></div><div class="mm" style="left:961.82px;top:115.06px;width:0.62px;background:#e07cc0"></div><div class="mm" style="left:962.44px;top:115.06px;width:3.72px;background:#4fcfd9"></div><div class="mm" style="left:966.16px;top:115.06px;width:0.62px;background:#da70d6"></div><div class="mm" style="left:966.78px;top:115.06px;width:1.86px;background:#e7a76a"></div><div class="mm" style="left:968.64px;top:115.06px;width:0.62px;background:#da70d6"></div><div class="mm" style="left:969.26px;top:115.06px;width:0.62px;background:#e07cc0"></div><div class="mm" style="left:969.88px;top:115.06px;width:2.48px;background:#4fcfd9"></div><div class="mm" style="left:972.36px;top:115.06px;width:0.62px;background:#da70d6"></div><div class="mm" style="left:972.98px;top:115.06px;width:0.62px;background:#da70d6"></div><div class="mm" style="left:974.22px;top:115.06px;width:4.34px;background:#d8d4c4"></div><div class="mm" style="left:978.56px;top:115.06px;width:0.62px;background:#e07cc0"></div><div class="mm" style="left:979.80px;top:115.06px;width:3.10px;background:#e7a76a"></div><div class="mm" style="left:982.90px;top:115.06px;width:0.62px;background:#e07cc0"></div><div class="mm" style="left:984.14px;top:115.06px;width:3.10px;background:#d8d4c4"></div><div class="mm" style="left:987.24px;top:115.06px;width:0.62px;background:#e07cc0"></div><div class="mm" style="left:988.48px;top:115.06px;width:19.22px;background:#e3d3a1"></div><div class="mm" style="left:1007.70px;top:115.06px;width:0.62px;background:#da70d6"></div><div class="mm" style="left:1008.32px;top:115.06px;width:0.62px;background:#da70d6"></div><div class="mm" style="left:1008.94px;top:115.06px;width:0.62px;background:#e07cc0"></div><div class="mm" style="left:957.48px;top:116.72px;width:0.62px;background:#da70d6"></div><div class="mm" style="left:955.00px;top:118.38px;width:0.62px;background:#da70d6"></div><div class="mm" style="left:955.62px;top:118.38px;width:0.62px;background:#da70d6"></div><div class="mm" style="left:956.24px;top:118.38px;width:0.62px;background:#e07cc0"></div><div class="mm" style="left:955.00px;top:121.70px;width:3.72px;background:#d8d4c4"></div><div class="mm" style="left:958.72px;top:121.70px;width:0.62px;background:#e07cc0"></div><div class="mm" style="left:959.34px;top:121.70px;width:1.86px;background:#4fcfd9"></div><div class="mm" style="left:961.20px;top:121.70px;width:0.62px;background:#da70d6"></div><div class="mm" style="left:961.82px;top:121.70px;width:3.72px;background:#e3d3a1"></div><div class="mm" style="left:965.54px;top:121.70px;width:0.62px;background:#e07cc0"></div><div class="mm" style="left:966.78px;top:121.70px;width:3.10px;background:#e68ac2"></div><div class="mm" style="left:970.50px;top:121.70px;width:0.62px;background:#da70d6"></div><div class="mm" style="left:971.12px;top:121.70px;width:1.86px;background:#d8d4c4"></div><div class="mm" style="left:972.98px;top:121.70px;width:0.62px;background:#e07cc0"></div><div class="mm" style="left:974.22px;top:121.70px;width:1.86px;background:#d8d4c4"></div><div class="mm" style="left:976.08px;top:121.70px;width:0.62px;background:#da70d6"></div><div class="mm" style="left:977.32px;top:121.70px;width:1.24px;background:#e07cc0"></div><div class="mm" style="left:979.18px;top:121.70px;width:0.62px;background:#da70d6"></div><div class="mm" style="left:957.48px;top:123.36px;width:1.86px;background:#e68ac2"></div><div class="mm" style="left:959.34px;top:123.36px;width:0.62px;background:#da70d6"></div><div class="mm" style="left:959.96px;top:125.02px;width:3.10px;background:#e68ac2"></div><div class="mm" style="left:963.68px;top:125.02px;width:3.10px;background:#d8d4c4"></div><div class="mm" style="left:967.40px;top:125.02px;width:0.62px;background:#e07cc0"></div><div class="mm" style="left:968.64px;top:125.02px;width:3.10px;background:#e68ac2"></div><div class="mm" style="left:972.36px;top:125.02px;width:7.44px;background:#d8d4c4"></div><div class="mm" style="left:979.80px;top:125.02px;width:0.62px;background:#e07cc0"></div><div class="mm" style="left:980.42px;top:125.02px;width:4.96px;background:#4fcfd9"></div><div class="mm" style="left:985.38px;top:125.02px;width:0.62px;background:#da70d6"></div><div class="mm" style="left:986.00px;top:125.02px;width:1.86px;background:#d8d4c4"></div><div class="mm" style="left:987.86px;top:125.02px;width:0.62px;background:#e07cc0"></div><div class="mm" style="left:988.48px;top:125.02px;width:3.72px;background:#4fcfd9"></div><div class="mm" style="left:992.20px;top:125.02px;width:0.62px;background:#e07cc0"></div><div class="mm" style="left:992.82px;top:125.02px;width:1.24px;background:#4fcfd9"></div><div class="mm" style="left:994.06px;top:125.02px;width:0.62px;background:#da70d6"></div><div class="mm" style="left:994.68px;top:125.02px;width:0.62px;background:#e07cc0"></div><div class="mm" style="left:959.96px;top:126.68px;width:1.24px;background:#e68ac2"></div><div class="mm" style="left:961.20px;top:126.68px;width:0.62px;background:#da70d6"></div><div class="mm" style="left:961.82px;top:126.68px;width:0.62px;background:#e07cc0"></div><div class="mm" style="left:962.44px;top:126.68px;width:3.10px;background:#d8d4c4"></div><div class="mm" style="left:965.54px;top:126.68px;width:0.62px;background:#da70d6"></div><div class="mm" style="left:966.78px;top:126.68px;width:3.72px;background:#e68ac2"></div><div class="mm" style="left:971.12px;top:126.68px;width:1.86px;background:#d8d4c4"></div><div class="mm" style="left:972.98px;top:126.68px;width:0.62px;background:#e07cc0"></div><div class="mm" style="left:973.60px;top:126.68px;width:3.72px;background:#4fcfd9"></div><div class="mm" style="left:977.32px;top:126.68px;width:0.62px;background:#da70d6"></div><div class="mm" style="left:977.94px;top:126.68px;width:1.86px;background:#e7a76a"></div><div class="mm" style="left:979.80px;top:126.68px;width:0.62px;background:#da70d6"></div><div class="mm" style="left:980.42px;top:126.68px;width:0.62px;background:#e07cc0"></div><div class="mm" style="left:981.04px;top:126.68px;width:2.48px;background:#4fcfd9"></div><div class="mm" style="left:983.52px;top:126.68px;width:0.62px;background:#da70d6"></div><div class="mm" style="left:984.14px;top:126.68px;width:0.62px;background:#da70d6"></div><div class="mm" style="left:985.38px;top:126.68px;width:4.34px;background:#d8d4c4"></div><div class="mm" style="left:989.72px;top:126.68px;width:0.62px;background:#e07cc0"></div><div class="mm" style="left:990.96px;top:126.68px;width:3.10px;background:#e7a76a"></div><div class="mm" style="left:994.06px;top:126.68px;width:0.62px;background:#e07cc0"></div><div class="mm" style="left:995.30px;top:126.68px;width:3.10px;background:#d8d4c4"></div><div class="mm" style="left:998.40px;top:126.68px;width:0.62px;background:#e07cc0"></div><div class="mm" style="left:999.64px;top:126.68px;width:6.82px;background:#e3d3a1"></div><div class="mm" style="left:1006.46px;top:126.68px;width:0.62px;background:#da70d6"></div><div class="mm" style="left:1007.08px;top:126.68px;width:0.62px;background:#da70d6"></div><div class="mm" style="left:1007.70px;top:126.68px;width:0.62px;background:#e07cc0"></div><div class="mm" style="left:959.96px;top:128.34px;width:1.86px;background:#d8d4c4"></div><div class="mm" style="left:961.82px;top:128.34px;width:0.62px;background:#e07cc0"></div><div class="mm" style="left:962.44px;top:128.34px;width:2.48px;background:#4fcfd9"></div><div class="mm" style="left:964.92px;top:128.34px;width:0.62px;background:#da70d6"></div><div class="mm" style="left:965.54px;top:128.34px;width:0.62px;background:#da70d6"></div><div class="mm" style="left:966.78px;top:128.34px;width:4.34px;background:#d8d4c4"></div><div class="mm" style="left:971.12px;top:128.34px;width:0.62px;background:#e07cc0"></div><div class="mm" style="left:972.36px;top:128.34px;width:2.48px;background:#e7a76a"></div><div class="mm" style="left:974.84px;top:128.34px;width:0.62px;background:#e07cc0"></div><div class="mm" style="left:976.08px;top:128.34px;width:7.44px;background:#d8d4c4"></div><div class="mm" style="left:983.52px;top:128.34px;width:0.62px;background:#e07cc0"></div><div class="mm" style="left:984.76px;top:128.34px;width:3.10px;background:#d8d4c4"></div><div class="mm" style="left:987.86px;top:128.34px;width:0.62px;background:#da70d6"></div><div class="mm" style="left:988.48px;top:128.34px;width:0.62px;background:#da70d6"></div><div class="mm" style="left:989.10px;top:128.34px;width:0.62px;background:#e07cc0"></div><div class="mm" style="left:957.48px;top:130.00px;width:0.62px;background:#da70d6"></div><div class="mm" style="left:958.10px;top:130.00px;width:3.10px;background:#e68ac2"></div><div class="mm" style="left:961.82px;top:130.00px;width:0.62px;background:#da70d6"></div><div class="mm" style="left:962.44px;top:130.00px;width:1.86px;background:#d8d4c4"></div><div class="mm" style="left:964.30px;top:130.00px;width:0.62px;background:#da70d6"></div><div class="mm" style="left:964.92px;top:130.00px;width:0.62px;background:#da70d6"></div><div class="mm" style="left:959.96px;top:131.66px;width:4.34px;background:#d8d4c4"></div><div class="mm" style="left:964.30px;top:131.66px;width:0.62px;background:#e07cc0"></div><div class="mm" style="left:964.92px;top:131.66px;width:3.10px;background:#4fcfd9"></div><div class="mm" style="left:968.02px;top:131.66px;width:0.62px;background:#da70d6"></div><div class="mm" style="left:968.64px;top:131.66px;width:19.22px;background:#e3d3a1"></div><div class="mm" style="left:987.86px;top:131.66px;width:0.62px;background:#e07cc0"></div><div class="mm" style="left:989.10px;top:131.66px;width:1.86px;background:#d8d4c4"></div><div class="mm" style="left:990.96px;top:131.66px;width:0.62px;background:#da70d6"></div><div class="mm" style="left:991.58px;top:131.66px;width:0.62px;background:#e07cc0"></div><div class="mm" style="left:959.96px;top:133.32px;width:1.86px;background:#d8d4c4"></div><div class="mm" style="left:961.82px;top:133.32px;width:0.62px;background:#e07cc0"></div><div class="mm" style="left:962.44px;top:133.32px;width:3.72px;background:#4fcfd9"></div><div class="mm" style="left:966.16px;top:133.32px;width:0.62px;background:#da70d6"></div><div class="mm" style="left:966.78px;top:133.32px;width:1.86px;background:#e7a76a"></div><div class="mm" style="left:968.64px;top:133.32px;width:0.62px;background:#da70d6"></div><div class="mm" style="left:969.26px;top:133.32px;width:0.62px;background:#e07cc0"></div><div class="mm" style="left:969.88px;top:133.32px;width:2.48px;background:#4fcfd9"></div><div class="mm" style="left:972.36px;top:133.32px;width:0.62px;background:#da70d6"></div><div class="mm" style="left:972.98px;top:133.32px;width:0.62px;background:#da70d6"></div><div class="mm" style="left:974.22px;top:133.32px;width:4.34px;background:#d8d4c4"></div><div class="mm" style="left:978.56px;top:133.32px;width:0.62px;background:#e07cc0"></div><div class="mm" style="left:979.80px;top:133.32px;width:3.10px;background:#e7a76a"></div><div class="mm" style="left:982.90px;top:133.32px;width:0.62px;background:#e07cc0"></div><div class="mm" style="left:984.14px;top:133.32px;width:3.10px;background:#d8d4c4"></div><div class="mm" style="left:987.24px;top:133.32px;width:0.62px;background:#e07cc0"></div><div class="mm" style="left:988.48px;top:133.32px;width:18.60px;background:#e3d3a1"></div><div class="mm" style="left:1007.08px;top:133.32px;width:0.62px;background:#da70d6"></div><div class="mm" style="left:1007.70px;top:133.32px;width:0.62px;background:#da70d6"></div><div class="mm" style="left:1008.32px;top:133.32px;width:0.62px;background:#e07cc0"></div><div class="mm" style="left:957.48px;top:134.98px;width:0.62px;background:#da70d6"></div><div class="mm" style="left:955.00px;top:136.64px;width:0.62px;background:#da70d6"></div><div class="mm" style="left:955.62px;top:136.64px;width:0.62px;background:#da70d6"></div><div class="mm" style="left:956.24px;top:136.64px;width:0.62px;background:#e07cc0"></div><div class="mm" style="left:955.00px;top:138.30px;width:1.24px;background:#e07cc0"></div><div class="mm" style="left:956.24px;top:138.30px;width:3.72px;background:#d8d4c4"></div><div class="mm" style="left:960.58px;top:138.30px;width:0.62px;background:#d8d4c4"></div><div class="mm" style="left:961.82px;top:138.30px;width:7.44px;background:#d8d4c4"></div><div class="mm" style="left:969.88px;top:138.30px;width:2.48px;background:#d8d4c4"></div><div class="mm" style="left:972.98px;top:138.30px;width:1.86px;background:#e68ac2"></div><div class="mm" style="left:975.46px;top:138.30px;width:4.96px;background:#d8d4c4"></div><div class="mm" style="left:980.42px;top:138.30px;width:0.62px;background:#e07cc0"></div><div class="mm" style="left:981.66px;top:138.30px;width:1.86px;background:#d8d4c4"></div><div class="mm" style="left:984.14px;top:138.30px;width:3.72px;background:#d8d4c4"></div><div class="mm" style="left:988.48px;top:138.30px;width:1.86px;background:#d8d4c4"></div><div class="mm" style="left:990.96px;top:138.30px;width:3.10px;background:#d8d4c4"></div><div class="mm" style="left:994.68px;top:138.30px;width:1.24px;background:#e68ac2"></div><div class="mm" style="left:996.54px;top:138.30px;width:1.24px;background:#d8d4c4"></div><div class="mm" style="left:998.40px;top:138.30px;width:1.24px;background:#d8d4c4"></div><div class="mm" style="left:1000.26px;top:138.30px;width:4.96px;background:#d8d4c4"></div><div class="mm" style="left:1005.84px;top:138.30px;width:1.24px;background:#d8d4c4"></div><div class="mm" style="left:1007.70px;top:138.30px;width:1.86px;background:#d8d4c4"></div><div class="mm" style="left:1010.18px;top:138.30px;width:2.48px;background:#d8d4c4"></div><div class="mm" style="left:1013.28px;top:138.30px;width:1.24px;background:#d8d4c4"></div><div class="mm" style="left:1015.14px;top:138.30px;width:1.86px;background:#d8d4c4"></div><div class="mm" style="left:1017.62px;top:138.30px;width:4.34px;background:#d8d4c4"></div><div class="mm" style="left:1022.58px;top:138.30px;width:2.48px;background:#d8d4c4"></div><div class="mm" style="left:1025.68px;top:138.30px;width:2.48px;background:#d8d4c4"></div><div class="mm" style="left:955.00px;top:139.96px;width:3.72px;background:#d8d4c4"></div><div class="mm" style="left:958.72px;top:139.96px;width:0.62px;background:#e07cc0"></div><div class="mm" style="left:959.34px;top:139.96px;width:1.86px;background:#4fcfd9"></div><div class="mm" style="left:961.20px;top:139.96px;width:0.62px;background:#da70d6"></div><div class="mm" style="left:961.82px;top:139.96px;width:3.72px;background:#e3d3a1"></div><div class="mm" style="left:965.54px;top:139.96px;width:0.62px;background:#e07cc0"></div><div class="mm" style="left:966.78px;top:139.96px;width:3.10px;background:#e68ac2"></div><div class="mm" style="left:970.50px;top:139.96px;width:0.62px;background:#da70d6"></div><div class="mm" style="left:971.12px;top:139.96px;width:1.86px;background:#d8d4c4"></div><div class="mm" style="left:972.98px;top:139.96px;width:0.62px;background:#e07cc0"></div><div class="mm" style="left:974.22px;top:139.96px;width:1.86px;background:#d8d4c4"></div><div class="mm" style="left:976.08px;top:139.96px;width:0.62px;background:#da70d6"></div><div class="mm" style="left:977.32px;top:139.96px;width:1.24px;background:#e07cc0"></div><div class="mm" style="left:979.18px;top:139.96px;width:0.62px;background:#da70d6"></div><div class="mm" style="left:957.48px;top:141.62px;width:1.86px;background:#e68ac2"></div><div class="mm" style="left:959.34px;top:141.62px;width:0.62px;background:#da70d6"></div><div class="mm" style="left:959.96px;top:143.28px;width:3.10px;background:#e68ac2"></div><div class="mm" style="left:963.68px;top:143.28px;width:0.62px;background:#da70d6"></div><div class="mm" style="left:964.92px;top:143.28px;width:4.96px;background:#d8d4c4"></div><div class="mm" style="left:969.88px;top:143.28px;width:0.62px;background:#e07cc0"></div><div class="mm" style="left:971.12px;top:143.28px;width:3.10px;background:#d8d4c4"></div><div class="mm" style="left:974.84px;top:143.28px;width:0.62px;background:#da70d6"></div><div class="mm" style="left:976.08px;top:143.28px;width:0.62px;background:#e07cc0"></div><div class="mm" style="left:977.32px;top:143.28px;width:1.86px;background:#d8d4c4"></div><div class="mm" style="left:979.18px;top:143.28px;width:0.62px;background:#e07cc0"></div><div class="mm" style="left:979.80px;top:143.28px;width:2.48px;background:#4fcfd9"></div><div class="mm" style="left:982.28px;top:143.28px;width:0.62px;background:#e07cc0"></div><div class="mm" style="left:959.96px;top:144.94px;width:3.10px;background:#e68ac2"></div><div class="mm" style="left:963.68px;top:144.94px;width:3.10px;background:#d8d4c4"></div><div class="mm" style="left:967.40px;top:144.94px;width:0.62px;background:#e07cc0"></div><div class="mm" style="left:968.64px;top:144.94px;width:3.10px;background:#e68ac2"></div><div class="mm" style="left:972.36px;top:144.94px;width:7.44px;background:#d8d4c4"></div><div class="mm" style="left:979.80px;top:144.94px;width:0.62px;background:#e07cc0"></div><div class="mm" style="left:980.42px;top:144.94px;width:10.54px;background:#4fcfd9"></div><div class="mm" style="left:990.96px;top:144.94px;width:0.62px;background:#da70d6"></div><div class="mm" style="left:962.44px;top:146.60px;width:1.86px;background:#d8d4c4"></div><div class="mm" style="left:964.30px;top:146.60px;width:0.62px;background:#e07cc0"></div><div class="mm" style="left:964.92px;top:146.60px;width:3.72px;background:#4fcfd9"></div><div class="mm" style="left:968.64px;top:146.60px;width:0.62px;background:#e07cc0"></div><div class="mm" style="left:969.26px;top:146.60px;width:1.24px;background:#4fcfd9"></div><div class="mm" style="left:970.50px;top:146.60px;width:0.62px;background:#e07cc0"></div><div class="mm" style="left:962.44px;top:148.26px;width:0.62px;background:#da70d6"></div><div class="mm" style="left:963.68px;top:148.26px;width:4.96px;background:#d8d4c4"></div><div class="mm" style="left:968.64px;top:148.26px;width:0.62px;background:#e07cc0"></div><div class="mm" style="left:969.88px;top:148.26px;width:3.10px;background:#d8d4c4"></div><div class="mm" style="left:973.60px;top:148.26px;width:0.62px;background:#da70d6"></div><div class="mm" style="left:974.22px;top:148.26px;width:0.62px;background:#e07cc0"></div><div class="mm" style="left:962.44px;top:149.92px;width:0.62px;background:#da70d6"></div><div class="mm" style="left:963.68px;top:149.92px;width:1.86px;background:#e68ac2"></div><div class="mm" style="left:965.54px;top:149.92px;width:0.62px;background:#e07cc0"></div><div class="mm" style="left:966.78px;top:149.92px;width:2.48px;background:#e7a76a"></div><div class="mm" style="left:969.88px;top:149.92px;width:0.62px;background:#da70d6"></div><div class="mm" style="left:959.96px;top:151.58px;width:0.62px;background:#da70d6"></div><div class="mm" style="left:960.58px;top:151.58px;width:0.62px;background:#e07cc0"></div><div class="mm" style="left:959.96px;top:153.24px;width:1.86px;background:#d8d4c4"></div><div class="mm" style="left:961.82px;top:153.24px;width:0.62px;background:#e07cc0"></div><div class="mm" style="left:962.44px;top:153.24px;width:2.48px;background:#4fcfd9"></div><div class="mm" style="left:964.92px;top:153.24px;width:0.62px;background:#da70d6"></div><div class="mm" style="left:965.54px;top:153.24px;width:0.62px;background:#da70d6"></div><div class="mm" style="left:966.78px;top:153.24px;width:4.34px;background:#d8d4c4"></div><div class="mm" style="left:971.12px;top:153.24px;width:0.62px;background:#e07cc0"></div><div class="mm" style="left:972.36px;top:153.24px;width:2.48px;background:#e7a76a"></div><div class="mm" style="left:974.84px;top:153.24px;width:0.62px;background:#e07cc0"></div><div class="mm" style="left:976.08px;top:153.24px;width:7.44px;background:#d8d4c4"></div><div class="mm" style="left:983.52px;top:153.24px;width:0.62px;background:#e07cc0"></div><div class="mm" style="left:984.76px;top:153.24px;width:3.10px;background:#d8d4c4"></div><div class="mm" style="left:987.86px;top:153.24px;width:0.62px;background:#da70d6"></div><div class="mm" style="left:988.48px;top:153.24px;width:0.62px;background:#da70d6"></div><div class="mm" style="left:989.10px;top:153.24px;width:0.62px;background:#e07cc0"></div><div class="mm" style="left:957.48px;top:154.90px;width:0.62px;background:#da70d6"></div><div class="mm" style="left:958.10px;top:154.90px;width:3.10px;background:#e68ac2"></div><div class="mm" style="left:961.82px;top:154.90px;width:0.62px;background:#da70d6"></div><div class="mm" style="left:962.44px;top:154.90px;width:1.86px;background:#d8d4c4"></div><div class="mm" style="left:964.30px;top:154.90px;width:0.62px;background:#da70d6"></div><div class="mm" style="left:964.92px;top:154.90px;width:0.62px;background:#da70d6"></div><div class="mm" style="left:959.96px;top:156.56px;width:1.86px;background:#d8d4c4"></div><div class="mm" style="left:961.82px;top:156.56px;width:0.62px;background:#e07cc0"></div><div class="mm" style="left:962.44px;top:156.56px;width:3.72px;background:#4fcfd9"></div><div class="mm" style="left:966.16px;top:156.56px;width:0.62px;background:#da70d6"></div><div class="mm" style="left:966.78px;top:156.56px;width:1.86px;background:#e7a76a"></div><div class="mm" style="left:968.64px;top:156.56px;width:0.62px;background:#da70d6"></div><div class="mm" style="left:969.26px;top:156.56px;width:0.62px;background:#e07cc0"></div><div class="mm" style="left:969.88px;top:156.56px;width:2.48px;background:#4fcfd9"></div><div class="mm" style="left:972.36px;top:156.56px;width:0.62px;background:#da70d6"></div><div class="mm" style="left:972.98px;top:156.56px;width:0.62px;background:#da70d6"></div><div class="mm" style="left:974.22px;top:156.56px;width:4.34px;background:#d8d4c4"></div><div class="mm" style="left:978.56px;top:156.56px;width:0.62px;background:#e07cc0"></div><div class="mm" style="left:979.80px;top:156.56px;width:3.10px;background:#e7a76a"></div><div class="mm" style="left:982.90px;top:156.56px;width:0.62px;background:#e07cc0"></div><div class="mm" style="left:984.14px;top:156.56px;width:3.10px;background:#d8d4c4"></div><div class="mm" style="left:987.24px;top:156.56px;width:0.62px;background:#e07cc0"></div><div class="mm" style="left:988.48px;top:156.56px;width:19.22px;background:#e3d3a1"></div><div class="mm" style="left:1007.70px;top:156.56px;width:0.62px;background:#da70d6"></div><div class="mm" style="left:1008.32px;top:156.56px;width:0.62px;background:#da70d6"></div><div class="mm" style="left:1008.94px;top:156.56px;width:0.62px;background:#e07cc0"></div><div class="mm" style="left:957.48px;top:158.22px;width:0.62px;background:#da70d6"></div><div class="mm" style="left:955.00px;top:159.88px;width:0.62px;background:#da70d6"></div><div class="mm" style="left:955.62px;top:159.88px;width:0.62px;background:#da70d6"></div><div class="mm" style="left:956.24px;top:159.88px;width:0.62px;background:#e07cc0"></div><div class="mm" style="left:955.00px;top:163.20px;width:3.72px;background:#d8d4c4"></div><div class="mm" style="left:958.72px;top:163.20px;width:0.62px;background:#e07cc0"></div><div class="mm" style="left:959.34px;top:163.20px;width:3.72px;background:#4fcfd9"></div><div class="mm" style="left:963.06px;top:163.20px;width:0.62px;background:#da70d6"></div><div class="mm" style="left:963.68px;top:163.20px;width:3.72px;background:#e3d3a1"></div><div class="mm" style="left:967.40px;top:163.20px;width:0.62px;background:#e07cc0"></div><div class="mm" style="left:968.64px;top:163.20px;width:3.10px;background:#e68ac2"></div><div class="mm" style="left:972.36px;top:163.20px;width:0.62px;background:#da70d6"></div><div class="mm" style="left:972.98px;top:163.20px;width:1.86px;background:#d8d4c4"></div><div class="mm" style="left:974.84px;top:163.20px;width:0.62px;background:#e07cc0"></div><div class="mm" style="left:976.08px;top:163.20px;width:1.86px;background:#d8d4c4"></div><div class="mm" style="left:977.94px;top:163.20px;width:0.62px;background:#da70d6"></div><div class="mm" style="left:979.18px;top:163.20px;width:1.24px;background:#e07cc0"></div><div class="mm" style="left:981.04px;top:163.20px;width:0.62px;background:#da70d6"></div><div class="mm" style="left:957.48px;top:164.86px;width:1.86px;background:#e68ac2"></div><div class="mm" style="left:959.34px;top:164.86px;width:0.62px;background:#da70d6"></div><div class="mm" style="left:959.96px;top:166.52px;width:3.10px;background:#e68ac2"></div><div class="mm" style="left:963.68px;top:166.52px;width:7.44px;background:#d8d4c4"></div><div class="mm" style="left:971.12px;top:166.52px;width:0.62px;background:#e07cc0"></div><div class="mm" style="left:971.74px;top:166.52px;width:10.54px;background:#4fcfd9"></div><div class="mm" style="left:982.28px;top:166.52px;width:0.62px;background:#da70d6"></div><div class="mm" style="left:982.90px;top:166.52px;width:1.86px;background:#d8d4c4"></div><div class="mm" style="left:984.76px;top:166.52px;width:0.62px;background:#e07cc0"></div><div class="mm" style="left:985.38px;top:166.52px;width:3.72px;background:#4fcfd9"></div><div class="mm" style="left:989.10px;top:166.52px;width:0.62px;background:#e07cc0"></div><div class="mm" style="left:989.72px;top:166.52px;width:1.24px;background:#4fcfd9"></div><div class="mm" style="left:990.96px;top:166.52px;width:0.62px;background:#da70d6"></div><div class="mm" style="left:991.58px;top:166.52px;width:0.62px;background:#e07cc0"></div><div class="mm" style="left:959.96px;top:168.18px;width:1.86px;background:#d8d4c4"></div><div class="mm" style="left:961.82px;top:168.18px;width:0.62px;background:#e07cc0"></div><div class="mm" style="left:962.44px;top:168.18px;width:2.48px;background:#4fcfd9"></div><div class="mm" style="left:964.92px;top:168.18px;width:0.62px;background:#da70d6"></div><div class="mm" style="left:965.54px;top:168.18px;width:0.62px;background:#da70d6"></div><div class="mm" style="left:966.78px;top:168.18px;width:4.34px;background:#d8d4c4"></div><div class="mm" style="left:971.12px;top:168.18px;width:0.62px;background:#e07cc0"></div><div class="mm" style="left:972.36px;top:168.18px;width:2.48px;background:#e7a76a"></div><div class="mm" style="left:975.46px;top:168.18px;width:0.62px;background:#da70d6"></div><div class="mm" style="left:976.08px;top:168.18px;width:0.62px;background:#da70d6"></div><div class="mm" style="left:976.70px;top:168.18px;width:0.62px;background:#e07cc0"></div><div class="mm" style="left:957.48px;top:169.84px;width:0.62px;background:#da70d6"></div><div class="mm" style="left:958.10px;top:169.84px;width:3.10px;background:#e68ac2"></div><div class="mm" style="left:961.82px;top:169.84px;width:0.62px;background:#da70d6"></div><div class="mm" style="left:962.44px;top:169.84px;width:1.86px;background:#d8d4c4"></div><div class="mm" style="left:964.30px;top:169.84px;width:0.62px;background:#da70d6"></div><div class="mm" style="left:964.92px;top:169.84px;width:0.62px;background:#da70d6"></div><div class="mm" style="left:959.96px;top:171.50px;width:4.34px;background:#d8d4c4"></div><div class="mm" style="left:964.30px;top:171.50px;width:0.62px;background:#e07cc0"></div><div class="mm" style="left:964.92px;top:171.50px;width:3.10px;background:#4fcfd9"></div><div class="mm" style="left:968.02px;top:171.50px;width:0.62px;background:#da70d6"></div><div class="mm" style="left:968.64px;top:171.50px;width:19.22px;background:#e3d3a1"></div><div class="mm" style="left:987.86px;top:171.50px;width:0.62px;background:#e07cc0"></div><div class="mm" style="left:989.10px;top:171.50px;width:1.86px;background:#d8d4c4"></div><div class="mm" style="left:990.96px;top:171.50px;width:0.62px;background:#da70d6"></div><div class="mm" style="left:991.58px;top:171.50px;width:0.62px;background:#e07cc0"></div><div class="mm" style="left:959.96px;top:173.16px;width:1.86px;background:#d8d4c4"></div><div class="mm" style="left:961.82px;top:173.16px;width:0.62px;background:#e07cc0"></div><div class="mm" style="left:962.44px;top:173.16px;width:3.72px;background:#4fcfd9"></div><div class="mm" style="left:966.16px;top:173.16px;width:0.62px;background:#da70d6"></div><div class="mm" style="left:966.78px;top:173.16px;width:1.86px;background:#e7a76a"></div><div class="mm" style="left:968.64px;top:173.16px;width:0.62px;background:#da70d6"></div><div class="mm" style="left:969.26px;top:173.16px;width:0.62px;background:#e07cc0"></div><div class="mm" style="left:969.88px;top:173.16px;width:2.48px;background:#4fcfd9"></div><div class="mm" style="left:972.36px;top:173.16px;width:0.62px;background:#da70d6"></div><div class="mm" style="left:972.98px;top:173.16px;width:0.62px;background:#da70d6"></div><div class="mm" style="left:974.22px;top:173.16px;width:4.34px;background:#d8d4c4"></div><div class="mm" style="left:978.56px;top:173.16px;width:0.62px;background:#e07cc0"></div><div class="mm" style="left:979.80px;top:173.16px;width:3.10px;background:#e7a76a"></div><div class="mm" style="left:982.90px;top:173.16px;width:0.62px;background:#e07cc0"></div><div class="mm" style="left:984.14px;top:173.16px;width:3.10px;background:#d8d4c4"></div><div class="mm" style="left:987.24px;top:173.16px;width:0.62px;background:#e07cc0"></div><div class="mm" style="left:988.48px;top:173.16px;width:11.16px;background:#e3d3a1"></div><div class="mm" style="left:999.64px;top:173.16px;width:0.62px;background:#da70d6"></div><div class="mm" style="left:1000.26px;top:173.16px;width:0.62px;background:#da70d6"></div><div class="mm" style="left:1000.88px;top:173.16px;width:0.62px;background:#e07cc0"></div><div class="mm" style="left:957.48px;top:174.82px;width:0.62px;background:#da70d6"></div><div class="mm" style="left:955.00px;top:176.48px;width:0.62px;background:#da70d6"></div><div class="mm" style="left:955.62px;top:176.48px;width:0.62px;background:#da70d6"></div><div class="mm" style="left:956.24px;top:176.48px;width:0.62px;background:#e07cc0"></div><div class="mm" style="left:955.00px;top:179.80px;width:3.72px;background:#e68ac2"></div><div class="mm" style="left:959.34px;top:179.80px;width:4.34px;background:#e68ac2"></div><div class="mm" style="left:964.30px;top:179.80px;width:3.72px;background:#d8d4c4"></div><div class="mm" style="left:968.02px;top:179.80px;width:0.62px;background:#e07cc0"></div></div><div class="a" style="left:1013px;top:93.6px;width:11px;height:90.7px;background:rgba(121,121,121,0.48)"></div><div class="a" style="left:1013.3px;top:413px;width:10.7px;height:2px;background:#47a3ad"></div><div class="a" style="left:943.8px;top:59.5px;width:2.2px;height:451px;background:#0e1218"></div><div class="a" style="left:1023px;top:29px;width:1px;height:481px;background:#1b1f26"></div><div class="a" style="left:306px;top:500.6px;width:497px;height:9.6px;background:rgba(121,121,121,0.4)"></div><div class="a" style="left:0;top:510.2px;width:1024px;height:1.4px;background:#4b5894"></div><div class="a" style="left:0;top:511.5px;width:1024px;height:3.5px;background:#0e1117"></div><div class="a" style="left:760px;top:511.5px;width:174px;height:3.5px;background:#f0a3a8"></div><div class="a" style="left:0px;top:513.6px;width:2.5px;height:1.4px;background:#7c8189;border-radius:1px 1px 0 0"></div><div class="a" style="left:44px;top:513.6px;width:3px;height:1.4px;background:#7c8189;border-radius:1px 1px 0 0"></div><div class="a" style="left:66px;top:513.6px;width:7px;height:1.4px;background:#7c8189;border-radius:1px 1px 0 0"></div><div class="a" style="left:111px;top:513.6px;width:3px;height:1.4px;background:#7c8189;border-radius:1px 1px 0 0"></div><div class="a" style="left:118px;top:513.6px;width:3px;height:1.4px;background:#7c8189;border-radius:1px 1px 0 0"></div><div class="a" style="left:187px;top:513.6px;width:9px;height:1.4px;background:#7c8189;border-radius:1px 1px 0 0"></div><div class="a" style="left:207px;top:513.6px;width:4px;height:1.4px;background:#7c8189;border-radius:1px 1px 0 0"></div><div class="a" style="left:241px;top:513.6px;width:4px;height:1.4px;background:#7c8189;border-radius:1px 1px 0 0"></div><div class="a" style="left:305px;top:513.6px;width:13px;height:1.4px;background:#7c8189;border-radius:1px 1px 0 0"></div><div class="a" style="left:360px;top:513.6px;width:4px;height:1.4px;background:#7c8189;border-radius:1px 1px 0 0"></div><div class="a" style="left:389px;top:513.6px;width:4px;height:1.4px;background:#7c8189;border-radius:1px 1px 0 0"></div><div class="a" style="left:770px;top:513.6px;width:6px;height:1.4px;background:#7c8189;border-radius:1px 1px 0 0"></div><div class="a" style="left:1007px;top:513.6px;width:6px;height:1.4px;background:#7c8189;border-radius:1px 1px 0 0"></div></body></html>
